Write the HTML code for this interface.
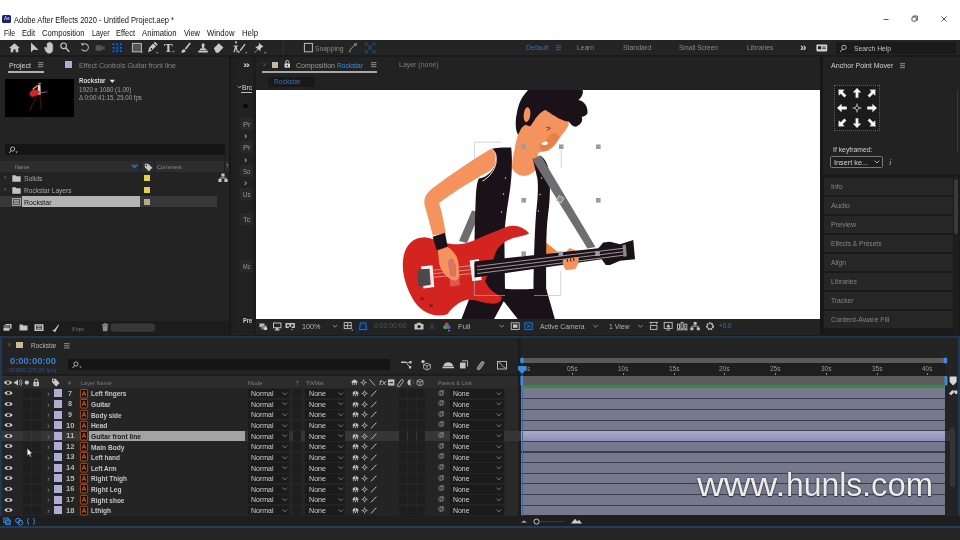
<!DOCTYPE html>
<html><head><meta charset="utf-8"><title>Adobe After Effects 2020 - Untitled Project.aep</title>
<style>
html,body{margin:0;padding:0;background:#232323;}
body{width:960px;height:540px;overflow:hidden;position:relative;font-family:"Liberation Sans",sans-serif;}
#app{position:absolute;left:0;top:0;width:960px;height:540px;overflow:hidden;will-change:transform;}
#app div{position:absolute;box-sizing:border-box;}
#app span{position:absolute;white-space:nowrap;transform-origin:0 50%;}
#app svg{position:absolute;overflow:visible;}
</style></head><body><div id="app">
<div style="left:0px;top:0px;width:960px;height:39.5px;background:#ffffff;"></div>
<div style="left:2px;top:15.4px;width:8.6px;height:7.2px;background:#1f1f6e;border-radius:1.5px;"></div>
<span style="left:3.6px;top:16.43px;font-size:4.6px;line-height:5.52px;color:#c9c9ff;font-weight:bold;transform:scaleX(0.952);">Ae</span>
<span style="left:13.5px;top:14.67px;font-size:8.4px;line-height:10.08px;color:#111;transform:scaleX(0.896);">Adobe After Effects 2020 - Untitled Project.aep *</span>
<span style="left:3.5px;top:29.03px;font-size:8.3px;line-height:9.96px;color:#111;transform:scaleX(0.823);">File</span>
<span style="left:22px;top:29.03px;font-size:8.3px;line-height:9.96px;color:#111;transform:scaleX(0.909);">Edit</span>
<span style="left:42px;top:29.03px;font-size:8.3px;line-height:9.96px;color:#111;transform:scaleX(0.921);">Composition</span>
<span style="left:91.5px;top:29.03px;font-size:8.3px;line-height:9.96px;color:#111;transform:scaleX(0.843);">Layer</span>
<span style="left:116px;top:29.03px;font-size:8.3px;line-height:9.96px;color:#111;transform:scaleX(0.902);">Effect</span>
<span style="left:142px;top:29.03px;font-size:8.3px;line-height:9.96px;color:#111;transform:scaleX(0.935);">Animation</span>
<span style="left:183.5px;top:29.03px;font-size:8.3px;line-height:9.96px;color:#111;transform:scaleX(0.897);">View</span>
<span style="left:206.5px;top:29.03px;font-size:8.3px;line-height:9.96px;color:#111;transform:scaleX(0.932);">Window</span>
<span style="left:241.5px;top:29.03px;font-size:8.3px;line-height:9.96px;color:#111;transform:scaleX(0.937);">Help</span>
<svg style="left:880px;top:13px" width="74" height="12" viewBox="0 0 74 12"><g stroke="#333" stroke-width="0.8" fill="none"><path d="M3.5 6.5h5"/><rect x="32" y="4" width="4.2" height="4.2" rx="0.8"/><path d="M33.2 4V3h4.2v4.2h-1.2"/><path d="M61.5 3.5l5 5M66.5 3.5l-5 5"/></g></svg>
<div style="left:0px;top:39.5px;width:960px;height:16.5px;background:#242424;"></div>
<div style="left:0px;top:55.3px;width:960px;height:1.6px;background:#1a1a1a;"></div>
<div style="left:0px;top:56.9px;width:229px;height:277.6px;background:#232323;"></div>
<div style="left:229px;top:56.9px;width:7px;height:277.6px;background:#1f1f1f;"></div>
<div style="left:229px;top:56.9px;width:2px;height:277.6px;background:#181818;"></div>
<div style="left:236px;top:56.9px;width:20px;height:277.6px;background:#212121;"></div>
<div style="left:256px;top:56.9px;width:564px;height:33.6px;background:#222222;"></div>
<div style="left:256px;top:90px;width:564px;height:228.5px;background:#ffffff;"></div>
<div style="left:256px;top:318.5px;width:564px;height:16px;background:#232323;"></div>
<div style="left:820px;top:56.9px;width:2.5px;height:277.6px;background:#171717;"></div>
<div style="left:822.5px;top:56.9px;width:137.5px;height:277.6px;background:#222222;"></div>
<div style="left:0px;top:334.5px;width:960px;height:1.7px;background:#1a1a1a;"></div>
<div style="left:0px;top:336.1px;width:960px;height:2.3px;background:#21344c;"></div>
<div style="left:0px;top:338.4px;width:960px;height:188.6px;background:#232323;"></div>
<div style="left:0px;top:526.3px;width:960px;height:1.3px;background:#263c58;"></div>
<div style="left:0px;top:527.7px;width:960px;height:12.3px;background:#252525;"></div>
<span style="left:7.5px;top:341.10px;font-size:7px;line-height:8.40px;color:#777;transform:scaleX(0.734);">×</span>
<div style="left:16px;top:341.5px;width:6.5px;height:6.5px;background:#c8bd98;"></div>
<span style="left:30.5px;top:341.18px;font-size:8px;line-height:9.60px;color:#b8b8b8;transform:scaleX(0.808);">Rockstar</span>
<svg style="left:64px;top:342.5px" width="6" height="6"><path d="M0 0.7h5.6M0 2.8h5.6M0 4.9h5.6" stroke="#aaa" stroke-width="0.8"/></svg>
<span style="left:10px;top:355.30px;font-size:9.5px;line-height:11.40px;color:#3482d4;font-weight:bold;transform:scaleX(0.990);">0:00:00:00</span>
<span style="left:8.5px;top:367.42px;font-size:5.6px;line-height:6.72px;color:#25568f;transform:scaleX(1.082);">00000 (25.00 fps)</span>
<div style="left:68px;top:359px;width:322px;height:10.8px;background:#151515;border-radius:1px;"></div>
<svg style="left:71px;top:360.5px" width="12" height="8"><circle cx="5" cy="3" r="2.1" fill="none" stroke="#bbb" stroke-width="0.9"/><path d="M3.6 4.6L1.6 7" stroke="#bbb" stroke-width="1"/><path d="M8.2 5.6h2.4l-1.2 1.3z" fill="#bbb"/></svg>
<div style="left:0px;top:374.4px;width:518px;height:1.6px;background:#1c1c1c;"></div>
<div style="left:0px;top:376px;width:518px;height:12px;background:#2c2c2c;"></div>
<div style="left:0px;top:388px;width:518px;height:128px;background:#242424;"></div>
<div style="left:504.5px;top:388px;width:13.5px;height:128px;background:#292929;"></div>
<div style="left:518px;top:338.4px;width:3px;height:188px;background:#1c1c1c;"></div>
<span style="left:67.5px;top:379.70px;font-size:5.5px;line-height:6.60px;color:#777;transform:scaleX(0.981);">#</span>
<span style="left:80.5px;top:380.01px;font-size:5.8px;line-height:6.96px;color:#7d7d7d;transform:scaleX(0.966);">Layer Name</span>
<span style="left:248px;top:380.01px;font-size:5.8px;line-height:6.96px;color:#7d7d7d;transform:scaleX(1.000);">Mode</span>
<span style="left:295.5px;top:379.52px;font-size:5.8px;line-height:6.96px;color:#7d7d7d;transform:scaleX(0.847);">T</span>
<span style="left:306px;top:380.01px;font-size:5.8px;line-height:6.96px;color:#7d7d7d;transform:scaleX(1.010);">TrkMat</span>
<span style="left:437.5px;top:380.01px;font-size:5.8px;line-height:6.96px;color:#7d7d7d;transform:scaleX(0.977);">Parent &amp; Link</span>
<svg style="left:3.5px;top:390.31px" width="9" height="6" viewBox="0 0 9 6"><path d="M0.3 3C2 0.3 7 0.3 8.7 3C7 5.7 2 5.7 0.3 3z" fill="#c8c8c8"/><circle cx="4.5" cy="3" r="1.5" fill="#222"/></svg>
<div style="left:22.5px;top:389.0px;width:8.5px;height:9.219999999999999px;background:#1e1e1e;"></div>
<div style="left:32px;top:389.0px;width:8.5px;height:9.219999999999999px;background:#1e1e1e;"></div>
<span style="left:46.8px;top:389.11px;font-size:8.5px;line-height:10.20px;color:#808080;transform:scaleX(0.989);">›</span>
<div style="left:54px;top:389.31px;width:8px;height:8px;background:#b1acd4;"></div>
<span style="left:68px;top:388.75px;font-size:7.6px;line-height:9.12px;color:#b8b8b8;font-weight:bold;transform:scaleX(0.946);">7</span>
<svg style="left:79.5px;top:388.71px" width="8" height="9.4" viewBox="0 0 8 9.4"><rect x="0.4" y="0.4" width="7.2" height="8.6" rx="1" fill="#1d0a00" stroke="#c4601f" stroke-width="0.8"/><path d="M2.3 6.8L3.6 2.6h0.8L5.7 6.8M2.9 5.3h2.2" stroke="#e8742a" stroke-width="0.8" fill="none"/></svg>
<span style="left:91px;top:389.40px;font-size:7.6px;line-height:9.12px;color:#c6c6c6;font-weight:bold;transform:scaleX(0.858);">Left fingers</span>
<div style="left:247.5px;top:389.0px;width:41.5px;height:9.219999999999999px;background:#1b1b1b;"></div>
<span style="left:251px;top:389.19px;font-size:8px;line-height:9.60px;color:#cfcfcf;transform:scaleX(0.873);">Normal</span>
<svg style="left:281.5px;top:391.81px" width="6" height="4"><path d="M0.6 0.6L2.8 2.8L5 0.6" stroke="#999" stroke-width="0.8" fill="none"/></svg>
<div style="left:292.5px;top:389.0px;width:8.5px;height:9.219999999999999px;background:#1e1e1e;"></div>
<div style="left:305px;top:389.0px;width:40px;height:9.219999999999999px;background:#1b1b1b;"></div>
<span style="left:309px;top:389.19px;font-size:8px;line-height:9.60px;color:#cfcfcf;transform:scaleX(0.889);">None</span>
<svg style="left:337.5px;top:391.81px" width="6" height="4"><path d="M0.6 0.6L2.8 2.8L5 0.6" stroke="#999" stroke-width="0.8" fill="none"/></svg>
<svg style="left:351.5px;top:390.11px" width="26" height="7" viewBox="0 0 26 7"><path d="M0.5 4.2C0.5 0 6.5 0 6.5 4.2z" fill="#c0c0c0"/><path d="M1.6 4.2v2M3.5 0.8v5.4M5.4 4.2v2" stroke="#c0c0c0" stroke-width="0.8"/><path d="M3.5 0.8v3.4" stroke="#222" stroke-width="0.6"/><circle cx="12.6" cy="3.4" r="1.5" fill="none" stroke="#c0c0c0" stroke-width="0.8"/><path d="M12.6 0.4v1.4M12.6 5v1.4M9.6 3.4h1.4M14.2 3.4h1.4" stroke="#c0c0c0" stroke-width="0.8"/><path d="M19 6.4L24.4 0.6" stroke="#c8c8c8" stroke-width="0.9"/></svg>
<div style="left:399px;top:389.0px;width:8px;height:9.219999999999999px;background:#1e1e1e;"></div>
<div style="left:407.8px;top:389.0px;width:8px;height:9.219999999999999px;background:#1e1e1e;"></div>
<div style="left:416.6px;top:389.0px;width:8px;height:9.219999999999999px;background:#1e1e1e;"></div>
<span style="left:437.8px;top:388.57px;font-size:7.4px;line-height:8.88px;color:#a0a0a0;transform:scaleX(0.905);">@</span>
<div style="left:450px;top:389.0px;width:53.5px;height:9.219999999999999px;background:#1b1b1b;"></div>
<span style="left:453px;top:389.19px;font-size:8px;line-height:9.60px;color:#cfcfcf;transform:scaleX(0.863);">None</span>
<svg style="left:496px;top:391.81px" width="6" height="4"><path d="M0.6 0.6L2.8 2.8L5 0.6" stroke="#999" stroke-width="0.8" fill="none"/></svg>
<svg style="left:3.5px;top:400.93px" width="9" height="6" viewBox="0 0 9 6"><path d="M0.3 3C2 0.3 7 0.3 8.7 3C7 5.7 2 5.7 0.3 3z" fill="#c8c8c8"/><circle cx="4.5" cy="3" r="1.5" fill="#222"/></svg>
<div style="left:22.5px;top:399.62px;width:8.5px;height:9.219999999999999px;background:#1e1e1e;"></div>
<div style="left:32px;top:399.62px;width:8.5px;height:9.219999999999999px;background:#1e1e1e;"></div>
<span style="left:46.8px;top:399.73px;font-size:8.5px;line-height:10.20px;color:#808080;transform:scaleX(0.989);">›</span>
<div style="left:54px;top:399.93px;width:8px;height:8px;background:#b1acd4;"></div>
<span style="left:68px;top:399.37px;font-size:7.6px;line-height:9.12px;color:#b8b8b8;font-weight:bold;transform:scaleX(0.946);">8</span>
<svg style="left:79.5px;top:399.33px" width="8" height="9.4" viewBox="0 0 8 9.4"><rect x="0.4" y="0.4" width="7.2" height="8.6" rx="1" fill="#1d0a00" stroke="#c4601f" stroke-width="0.8"/><path d="M2.3 6.8L3.6 2.6h0.8L5.7 6.8M2.9 5.3h2.2" stroke="#e8742a" stroke-width="0.8" fill="none"/></svg>
<span style="left:91px;top:400.02px;font-size:7.6px;line-height:9.12px;color:#c6c6c6;font-weight:bold;transform:scaleX(0.871);">Guitar</span>
<div style="left:247.5px;top:399.62px;width:41.5px;height:9.219999999999999px;background:#1b1b1b;"></div>
<span style="left:251px;top:399.81px;font-size:8px;line-height:9.60px;color:#cfcfcf;transform:scaleX(0.873);">Normal</span>
<svg style="left:281.5px;top:402.43px" width="6" height="4"><path d="M0.6 0.6L2.8 2.8L5 0.6" stroke="#999" stroke-width="0.8" fill="none"/></svg>
<div style="left:292.5px;top:399.62px;width:8.5px;height:9.219999999999999px;background:#1e1e1e;"></div>
<div style="left:305px;top:399.62px;width:40px;height:9.219999999999999px;background:#1b1b1b;"></div>
<span style="left:309px;top:399.81px;font-size:8px;line-height:9.60px;color:#cfcfcf;transform:scaleX(0.889);">None</span>
<svg style="left:337.5px;top:402.43px" width="6" height="4"><path d="M0.6 0.6L2.8 2.8L5 0.6" stroke="#999" stroke-width="0.8" fill="none"/></svg>
<svg style="left:351.5px;top:400.73px" width="26" height="7" viewBox="0 0 26 7"><path d="M0.5 4.2C0.5 0 6.5 0 6.5 4.2z" fill="#c0c0c0"/><path d="M1.6 4.2v2M3.5 0.8v5.4M5.4 4.2v2" stroke="#c0c0c0" stroke-width="0.8"/><path d="M3.5 0.8v3.4" stroke="#222" stroke-width="0.6"/><circle cx="12.6" cy="3.4" r="1.5" fill="none" stroke="#c0c0c0" stroke-width="0.8"/><path d="M12.6 0.4v1.4M12.6 5v1.4M9.6 3.4h1.4M14.2 3.4h1.4" stroke="#c0c0c0" stroke-width="0.8"/><path d="M19 6.4L24.4 0.6" stroke="#c8c8c8" stroke-width="0.9"/></svg>
<div style="left:399px;top:399.62px;width:8px;height:9.219999999999999px;background:#1e1e1e;"></div>
<div style="left:407.8px;top:399.62px;width:8px;height:9.219999999999999px;background:#1e1e1e;"></div>
<div style="left:416.6px;top:399.62px;width:8px;height:9.219999999999999px;background:#1e1e1e;"></div>
<span style="left:437.8px;top:399.19px;font-size:7.4px;line-height:8.88px;color:#a0a0a0;transform:scaleX(0.905);">@</span>
<div style="left:450px;top:399.62px;width:53.5px;height:9.219999999999999px;background:#1b1b1b;"></div>
<span style="left:453px;top:399.81px;font-size:8px;line-height:9.60px;color:#cfcfcf;transform:scaleX(0.863);">None</span>
<svg style="left:496px;top:402.43px" width="6" height="4"><path d="M0.6 0.6L2.8 2.8L5 0.6" stroke="#999" stroke-width="0.8" fill="none"/></svg>
<svg style="left:3.5px;top:411.55px" width="9" height="6" viewBox="0 0 9 6"><path d="M0.3 3C2 0.3 7 0.3 8.7 3C7 5.7 2 5.7 0.3 3z" fill="#c8c8c8"/><circle cx="4.5" cy="3" r="1.5" fill="#222"/></svg>
<div style="left:22.5px;top:410.24px;width:8.5px;height:9.219999999999999px;background:#1e1e1e;"></div>
<div style="left:32px;top:410.24px;width:8.5px;height:9.219999999999999px;background:#1e1e1e;"></div>
<span style="left:46.8px;top:410.35px;font-size:8.5px;line-height:10.20px;color:#808080;transform:scaleX(0.989);">›</span>
<div style="left:54px;top:410.55px;width:8px;height:8px;background:#b1acd4;"></div>
<span style="left:68px;top:409.99px;font-size:7.6px;line-height:9.12px;color:#b8b8b8;font-weight:bold;transform:scaleX(0.946);">9</span>
<svg style="left:79.5px;top:409.95px" width="8" height="9.4" viewBox="0 0 8 9.4"><rect x="0.4" y="0.4" width="7.2" height="8.6" rx="1" fill="#1d0a00" stroke="#c4601f" stroke-width="0.8"/><path d="M2.3 6.8L3.6 2.6h0.8L5.7 6.8M2.9 5.3h2.2" stroke="#e8742a" stroke-width="0.8" fill="none"/></svg>
<span style="left:91px;top:410.64px;font-size:7.6px;line-height:9.12px;color:#c6c6c6;font-weight:bold;transform:scaleX(0.840);">Body side</span>
<div style="left:247.5px;top:410.24px;width:41.5px;height:9.219999999999999px;background:#1b1b1b;"></div>
<span style="left:251px;top:410.43px;font-size:8px;line-height:9.60px;color:#cfcfcf;transform:scaleX(0.873);">Normal</span>
<svg style="left:281.5px;top:413.05px" width="6" height="4"><path d="M0.6 0.6L2.8 2.8L5 0.6" stroke="#999" stroke-width="0.8" fill="none"/></svg>
<div style="left:292.5px;top:410.24px;width:8.5px;height:9.219999999999999px;background:#1e1e1e;"></div>
<div style="left:305px;top:410.24px;width:40px;height:9.219999999999999px;background:#1b1b1b;"></div>
<span style="left:309px;top:410.43px;font-size:8px;line-height:9.60px;color:#cfcfcf;transform:scaleX(0.889);">None</span>
<svg style="left:337.5px;top:413.05px" width="6" height="4"><path d="M0.6 0.6L2.8 2.8L5 0.6" stroke="#999" stroke-width="0.8" fill="none"/></svg>
<svg style="left:351.5px;top:411.35px" width="26" height="7" viewBox="0 0 26 7"><path d="M0.5 4.2C0.5 0 6.5 0 6.5 4.2z" fill="#c0c0c0"/><path d="M1.6 4.2v2M3.5 0.8v5.4M5.4 4.2v2" stroke="#c0c0c0" stroke-width="0.8"/><path d="M3.5 0.8v3.4" stroke="#222" stroke-width="0.6"/><circle cx="12.6" cy="3.4" r="1.5" fill="none" stroke="#c0c0c0" stroke-width="0.8"/><path d="M12.6 0.4v1.4M12.6 5v1.4M9.6 3.4h1.4M14.2 3.4h1.4" stroke="#c0c0c0" stroke-width="0.8"/><path d="M19 6.4L24.4 0.6" stroke="#c8c8c8" stroke-width="0.9"/></svg>
<div style="left:399px;top:410.24px;width:8px;height:9.219999999999999px;background:#1e1e1e;"></div>
<div style="left:407.8px;top:410.24px;width:8px;height:9.219999999999999px;background:#1e1e1e;"></div>
<div style="left:416.6px;top:410.24px;width:8px;height:9.219999999999999px;background:#1e1e1e;"></div>
<span style="left:437.8px;top:409.81px;font-size:7.4px;line-height:8.88px;color:#a0a0a0;transform:scaleX(0.905);">@</span>
<div style="left:450px;top:410.24px;width:53.5px;height:9.219999999999999px;background:#1b1b1b;"></div>
<span style="left:453px;top:410.43px;font-size:8px;line-height:9.60px;color:#cfcfcf;transform:scaleX(0.863);">None</span>
<svg style="left:496px;top:413.05px" width="6" height="4"><path d="M0.6 0.6L2.8 2.8L5 0.6" stroke="#999" stroke-width="0.8" fill="none"/></svg>
<svg style="left:3.5px;top:422.17px" width="9" height="6" viewBox="0 0 9 6"><path d="M0.3 3C2 0.3 7 0.3 8.7 3C7 5.7 2 5.7 0.3 3z" fill="#c8c8c8"/><circle cx="4.5" cy="3" r="1.5" fill="#222"/></svg>
<div style="left:22.5px;top:420.86px;width:8.5px;height:9.219999999999999px;background:#1e1e1e;"></div>
<div style="left:32px;top:420.86px;width:8.5px;height:9.219999999999999px;background:#1e1e1e;"></div>
<span style="left:46.8px;top:420.97px;font-size:8.5px;line-height:10.20px;color:#808080;transform:scaleX(0.989);">›</span>
<div style="left:54px;top:421.17px;width:8px;height:8px;background:#b1acd4;"></div>
<span style="left:66px;top:420.61px;font-size:7.6px;line-height:9.12px;color:#b8b8b8;font-weight:bold;transform:scaleX(1.006);">10</span>
<svg style="left:79.5px;top:420.57px" width="8" height="9.4" viewBox="0 0 8 9.4"><rect x="0.4" y="0.4" width="7.2" height="8.6" rx="1" fill="#1d0a00" stroke="#c4601f" stroke-width="0.8"/><path d="M2.3 6.8L3.6 2.6h0.8L5.7 6.8M2.9 5.3h2.2" stroke="#e8742a" stroke-width="0.8" fill="none"/></svg>
<span style="left:91px;top:421.26px;font-size:7.6px;line-height:9.12px;color:#c6c6c6;font-weight:bold;transform:scaleX(0.888);">Head</span>
<div style="left:247.5px;top:420.86px;width:41.5px;height:9.219999999999999px;background:#1b1b1b;"></div>
<span style="left:251px;top:421.05px;font-size:8px;line-height:9.60px;color:#cfcfcf;transform:scaleX(0.873);">Normal</span>
<svg style="left:281.5px;top:423.67px" width="6" height="4"><path d="M0.6 0.6L2.8 2.8L5 0.6" stroke="#999" stroke-width="0.8" fill="none"/></svg>
<div style="left:292.5px;top:420.86px;width:8.5px;height:9.219999999999999px;background:#1e1e1e;"></div>
<div style="left:305px;top:420.86px;width:40px;height:9.219999999999999px;background:#1b1b1b;"></div>
<span style="left:309px;top:421.05px;font-size:8px;line-height:9.60px;color:#cfcfcf;transform:scaleX(0.889);">None</span>
<svg style="left:337.5px;top:423.67px" width="6" height="4"><path d="M0.6 0.6L2.8 2.8L5 0.6" stroke="#999" stroke-width="0.8" fill="none"/></svg>
<svg style="left:351.5px;top:421.97px" width="26" height="7" viewBox="0 0 26 7"><path d="M0.5 4.2C0.5 0 6.5 0 6.5 4.2z" fill="#c0c0c0"/><path d="M1.6 4.2v2M3.5 0.8v5.4M5.4 4.2v2" stroke="#c0c0c0" stroke-width="0.8"/><path d="M3.5 0.8v3.4" stroke="#222" stroke-width="0.6"/><circle cx="12.6" cy="3.4" r="1.5" fill="none" stroke="#c0c0c0" stroke-width="0.8"/><path d="M12.6 0.4v1.4M12.6 5v1.4M9.6 3.4h1.4M14.2 3.4h1.4" stroke="#c0c0c0" stroke-width="0.8"/><path d="M19 6.4L24.4 0.6" stroke="#c8c8c8" stroke-width="0.9"/></svg>
<div style="left:399px;top:420.86px;width:8px;height:9.219999999999999px;background:#1e1e1e;"></div>
<div style="left:407.8px;top:420.86px;width:8px;height:9.219999999999999px;background:#1e1e1e;"></div>
<div style="left:416.6px;top:420.86px;width:8px;height:9.219999999999999px;background:#1e1e1e;"></div>
<span style="left:437.8px;top:420.43px;font-size:7.4px;line-height:8.88px;color:#a0a0a0;transform:scaleX(0.905);">@</span>
<div style="left:450px;top:420.86px;width:53.5px;height:9.219999999999999px;background:#1b1b1b;"></div>
<span style="left:453px;top:421.05px;font-size:8px;line-height:9.60px;color:#cfcfcf;transform:scaleX(0.863);">None</span>
<svg style="left:496px;top:423.67px" width="6" height="4"><path d="M0.6 0.6L2.8 2.8L5 0.6" stroke="#999" stroke-width="0.8" fill="none"/></svg>
<div style="left:0px;top:431.08px;width:518px;height:10.02px;background:#363636;"></div>
<svg style="left:3.5px;top:432.79px" width="9" height="6" viewBox="0 0 9 6"><path d="M0.3 3C2 0.3 7 0.3 8.7 3C7 5.7 2 5.7 0.3 3z" fill="#c8c8c8"/><circle cx="4.5" cy="3" r="1.5" fill="#222"/></svg>
<div style="left:22.5px;top:431.48px;width:8.5px;height:9.219999999999999px;background:#2e2e2e;"></div>
<div style="left:32px;top:431.48px;width:8.5px;height:9.219999999999999px;background:#2e2e2e;"></div>
<span style="left:46.8px;top:431.59px;font-size:8.5px;line-height:10.20px;color:#808080;transform:scaleX(0.989);">›</span>
<div style="left:54px;top:431.79px;width:8px;height:8px;background:#b1acd4;"></div>
<span style="left:66px;top:431.23px;font-size:7.6px;line-height:9.12px;color:#b8b8b8;font-weight:bold;transform:scaleX(1.058);">11</span>
<svg style="left:79.5px;top:431.19px" width="8" height="9.4" viewBox="0 0 8 9.4"><rect x="0.4" y="0.4" width="7.2" height="8.6" rx="1" fill="#1d0a00" stroke="#c4601f" stroke-width="0.8"/><path d="M2.3 6.8L3.6 2.6h0.8L5.7 6.8M2.9 5.3h2.2" stroke="#e8742a" stroke-width="0.8" fill="none"/></svg>
<div style="left:88.5px;top:431.28000000000003px;width:156.5px;height:9.62px;background:#a3a3a3;"></div>
<span style="left:91px;top:431.88px;font-size:7.6px;line-height:9.12px;color:#1a1a1a;font-weight:bold;transform:scaleX(0.877);">Guitar front line</span>
<div style="left:247.5px;top:431.48px;width:41.5px;height:9.219999999999999px;background:#1b1b1b;"></div>
<span style="left:251px;top:431.67px;font-size:8px;line-height:9.60px;color:#cfcfcf;transform:scaleX(0.873);">Normal</span>
<svg style="left:281.5px;top:434.29px" width="6" height="4"><path d="M0.6 0.6L2.8 2.8L5 0.6" stroke="#999" stroke-width="0.8" fill="none"/></svg>
<div style="left:292.5px;top:431.48px;width:8.5px;height:9.219999999999999px;background:#1e1e1e;"></div>
<div style="left:305px;top:431.48px;width:40px;height:9.219999999999999px;background:#1b1b1b;"></div>
<span style="left:309px;top:431.67px;font-size:8px;line-height:9.60px;color:#cfcfcf;transform:scaleX(0.889);">None</span>
<svg style="left:337.5px;top:434.29px" width="6" height="4"><path d="M0.6 0.6L2.8 2.8L5 0.6" stroke="#999" stroke-width="0.8" fill="none"/></svg>
<svg style="left:351.5px;top:432.59px" width="26" height="7" viewBox="0 0 26 7"><path d="M0.5 4.2C0.5 0 6.5 0 6.5 4.2z" fill="#c0c0c0"/><path d="M1.6 4.2v2M3.5 0.8v5.4M5.4 4.2v2" stroke="#c0c0c0" stroke-width="0.8"/><path d="M3.5 0.8v3.4" stroke="#222" stroke-width="0.6"/><circle cx="12.6" cy="3.4" r="1.5" fill="none" stroke="#c0c0c0" stroke-width="0.8"/><path d="M12.6 0.4v1.4M12.6 5v1.4M9.6 3.4h1.4M14.2 3.4h1.4" stroke="#c0c0c0" stroke-width="0.8"/><path d="M19 6.4L24.4 0.6" stroke="#c8c8c8" stroke-width="0.9"/></svg>
<div style="left:399px;top:431.48px;width:8px;height:9.219999999999999px;background:#1e1e1e;"></div>
<div style="left:407.8px;top:431.48px;width:8px;height:9.219999999999999px;background:#1e1e1e;"></div>
<div style="left:416.6px;top:431.48px;width:8px;height:9.219999999999999px;background:#1e1e1e;"></div>
<span style="left:437.8px;top:431.05px;font-size:7.4px;line-height:8.88px;color:#a0a0a0;transform:scaleX(0.905);">@</span>
<div style="left:450px;top:431.48px;width:53.5px;height:9.219999999999999px;background:#1b1b1b;"></div>
<span style="left:453px;top:431.67px;font-size:8px;line-height:9.60px;color:#cfcfcf;transform:scaleX(0.863);">None</span>
<svg style="left:496px;top:434.29px" width="6" height="4"><path d="M0.6 0.6L2.8 2.8L5 0.6" stroke="#999" stroke-width="0.8" fill="none"/></svg>
<svg style="left:3.5px;top:443.41px" width="9" height="6" viewBox="0 0 9 6"><path d="M0.3 3C2 0.3 7 0.3 8.7 3C7 5.7 2 5.7 0.3 3z" fill="#c8c8c8"/><circle cx="4.5" cy="3" r="1.5" fill="#222"/></svg>
<div style="left:22.5px;top:442.09999999999997px;width:8.5px;height:9.219999999999999px;background:#1e1e1e;"></div>
<div style="left:32px;top:442.09999999999997px;width:8.5px;height:9.219999999999999px;background:#1e1e1e;"></div>
<span style="left:46.8px;top:442.21px;font-size:8.5px;line-height:10.20px;color:#808080;transform:scaleX(0.989);">›</span>
<div style="left:54px;top:442.40999999999997px;width:8px;height:8px;background:#b1acd4;"></div>
<span style="left:66px;top:441.85px;font-size:7.6px;line-height:9.12px;color:#b8b8b8;font-weight:bold;transform:scaleX(1.006);">12</span>
<svg style="left:79.5px;top:441.81px" width="8" height="9.4" viewBox="0 0 8 9.4"><rect x="0.4" y="0.4" width="7.2" height="8.6" rx="1" fill="#1d0a00" stroke="#c4601f" stroke-width="0.8"/><path d="M2.3 6.8L3.6 2.6h0.8L5.7 6.8M2.9 5.3h2.2" stroke="#e8742a" stroke-width="0.8" fill="none"/></svg>
<span style="left:91px;top:442.50px;font-size:7.6px;line-height:9.12px;color:#c6c6c6;font-weight:bold;transform:scaleX(0.872);">Main Body</span>
<div style="left:247.5px;top:442.09999999999997px;width:41.5px;height:9.219999999999999px;background:#1b1b1b;"></div>
<span style="left:251px;top:442.29px;font-size:8px;line-height:9.60px;color:#cfcfcf;transform:scaleX(0.873);">Normal</span>
<svg style="left:281.5px;top:444.91px" width="6" height="4"><path d="M0.6 0.6L2.8 2.8L5 0.6" stroke="#999" stroke-width="0.8" fill="none"/></svg>
<div style="left:292.5px;top:442.09999999999997px;width:8.5px;height:9.219999999999999px;background:#1e1e1e;"></div>
<div style="left:305px;top:442.09999999999997px;width:40px;height:9.219999999999999px;background:#1b1b1b;"></div>
<span style="left:309px;top:442.29px;font-size:8px;line-height:9.60px;color:#cfcfcf;transform:scaleX(0.889);">None</span>
<svg style="left:337.5px;top:444.91px" width="6" height="4"><path d="M0.6 0.6L2.8 2.8L5 0.6" stroke="#999" stroke-width="0.8" fill="none"/></svg>
<svg style="left:351.5px;top:443.21px" width="26" height="7" viewBox="0 0 26 7"><path d="M0.5 4.2C0.5 0 6.5 0 6.5 4.2z" fill="#c0c0c0"/><path d="M1.6 4.2v2M3.5 0.8v5.4M5.4 4.2v2" stroke="#c0c0c0" stroke-width="0.8"/><path d="M3.5 0.8v3.4" stroke="#222" stroke-width="0.6"/><circle cx="12.6" cy="3.4" r="1.5" fill="none" stroke="#c0c0c0" stroke-width="0.8"/><path d="M12.6 0.4v1.4M12.6 5v1.4M9.6 3.4h1.4M14.2 3.4h1.4" stroke="#c0c0c0" stroke-width="0.8"/><path d="M19 6.4L24.4 0.6" stroke="#c8c8c8" stroke-width="0.9"/></svg>
<div style="left:399px;top:442.09999999999997px;width:8px;height:9.219999999999999px;background:#1e1e1e;"></div>
<div style="left:407.8px;top:442.09999999999997px;width:8px;height:9.219999999999999px;background:#1e1e1e;"></div>
<div style="left:416.6px;top:442.09999999999997px;width:8px;height:9.219999999999999px;background:#1e1e1e;"></div>
<span style="left:437.8px;top:441.67px;font-size:7.4px;line-height:8.88px;color:#a0a0a0;transform:scaleX(0.905);">@</span>
<div style="left:450px;top:442.09999999999997px;width:53.5px;height:9.219999999999999px;background:#1b1b1b;"></div>
<span style="left:453px;top:442.29px;font-size:8px;line-height:9.60px;color:#cfcfcf;transform:scaleX(0.863);">None</span>
<svg style="left:496px;top:444.91px" width="6" height="4"><path d="M0.6 0.6L2.8 2.8L5 0.6" stroke="#999" stroke-width="0.8" fill="none"/></svg>
<svg style="left:3.5px;top:454.03px" width="9" height="6" viewBox="0 0 9 6"><path d="M0.3 3C2 0.3 7 0.3 8.7 3C7 5.7 2 5.7 0.3 3z" fill="#c8c8c8"/><circle cx="4.5" cy="3" r="1.5" fill="#222"/></svg>
<div style="left:22.5px;top:452.71999999999997px;width:8.5px;height:9.219999999999999px;background:#1e1e1e;"></div>
<div style="left:32px;top:452.71999999999997px;width:8.5px;height:9.219999999999999px;background:#1e1e1e;"></div>
<span style="left:46.8px;top:452.83px;font-size:8.5px;line-height:10.20px;color:#808080;transform:scaleX(0.989);">›</span>
<div style="left:54px;top:453.03px;width:8px;height:8px;background:#b1acd4;"></div>
<span style="left:66px;top:452.47px;font-size:7.6px;line-height:9.12px;color:#b8b8b8;font-weight:bold;transform:scaleX(1.006);">13</span>
<svg style="left:79.5px;top:452.43px" width="8" height="9.4" viewBox="0 0 8 9.4"><rect x="0.4" y="0.4" width="7.2" height="8.6" rx="1" fill="#1d0a00" stroke="#c4601f" stroke-width="0.8"/><path d="M2.3 6.8L3.6 2.6h0.8L5.7 6.8M2.9 5.3h2.2" stroke="#e8742a" stroke-width="0.8" fill="none"/></svg>
<span style="left:91px;top:453.12px;font-size:7.6px;line-height:9.12px;color:#c6c6c6;font-weight:bold;transform:scaleX(0.848);">Left hand</span>
<div style="left:247.5px;top:452.71999999999997px;width:41.5px;height:9.219999999999999px;background:#1b1b1b;"></div>
<span style="left:251px;top:452.91px;font-size:8px;line-height:9.60px;color:#cfcfcf;transform:scaleX(0.873);">Normal</span>
<svg style="left:281.5px;top:455.53px" width="6" height="4"><path d="M0.6 0.6L2.8 2.8L5 0.6" stroke="#999" stroke-width="0.8" fill="none"/></svg>
<div style="left:292.5px;top:452.71999999999997px;width:8.5px;height:9.219999999999999px;background:#1e1e1e;"></div>
<div style="left:305px;top:452.71999999999997px;width:40px;height:9.219999999999999px;background:#1b1b1b;"></div>
<span style="left:309px;top:452.91px;font-size:8px;line-height:9.60px;color:#cfcfcf;transform:scaleX(0.889);">None</span>
<svg style="left:337.5px;top:455.53px" width="6" height="4"><path d="M0.6 0.6L2.8 2.8L5 0.6" stroke="#999" stroke-width="0.8" fill="none"/></svg>
<svg style="left:351.5px;top:453.83px" width="26" height="7" viewBox="0 0 26 7"><path d="M0.5 4.2C0.5 0 6.5 0 6.5 4.2z" fill="#c0c0c0"/><path d="M1.6 4.2v2M3.5 0.8v5.4M5.4 4.2v2" stroke="#c0c0c0" stroke-width="0.8"/><path d="M3.5 0.8v3.4" stroke="#222" stroke-width="0.6"/><circle cx="12.6" cy="3.4" r="1.5" fill="none" stroke="#c0c0c0" stroke-width="0.8"/><path d="M12.6 0.4v1.4M12.6 5v1.4M9.6 3.4h1.4M14.2 3.4h1.4" stroke="#c0c0c0" stroke-width="0.8"/><path d="M19 6.4L24.4 0.6" stroke="#c8c8c8" stroke-width="0.9"/></svg>
<div style="left:399px;top:452.71999999999997px;width:8px;height:9.219999999999999px;background:#1e1e1e;"></div>
<div style="left:407.8px;top:452.71999999999997px;width:8px;height:9.219999999999999px;background:#1e1e1e;"></div>
<div style="left:416.6px;top:452.71999999999997px;width:8px;height:9.219999999999999px;background:#1e1e1e;"></div>
<span style="left:437.8px;top:452.29px;font-size:7.4px;line-height:8.88px;color:#a0a0a0;transform:scaleX(0.905);">@</span>
<div style="left:450px;top:452.71999999999997px;width:53.5px;height:9.219999999999999px;background:#1b1b1b;"></div>
<span style="left:453px;top:452.91px;font-size:8px;line-height:9.60px;color:#cfcfcf;transform:scaleX(0.863);">None</span>
<svg style="left:496px;top:455.53px" width="6" height="4"><path d="M0.6 0.6L2.8 2.8L5 0.6" stroke="#999" stroke-width="0.8" fill="none"/></svg>
<svg style="left:3.5px;top:464.65px" width="9" height="6" viewBox="0 0 9 6"><path d="M0.3 3C2 0.3 7 0.3 8.7 3C7 5.7 2 5.7 0.3 3z" fill="#c8c8c8"/><circle cx="4.5" cy="3" r="1.5" fill="#222"/></svg>
<div style="left:22.5px;top:463.34px;width:8.5px;height:9.219999999999999px;background:#1e1e1e;"></div>
<div style="left:32px;top:463.34px;width:8.5px;height:9.219999999999999px;background:#1e1e1e;"></div>
<span style="left:46.8px;top:463.45px;font-size:8.5px;line-height:10.20px;color:#808080;transform:scaleX(0.989);">›</span>
<div style="left:54px;top:463.65px;width:8px;height:8px;background:#b1acd4;"></div>
<span style="left:66px;top:463.09px;font-size:7.6px;line-height:9.12px;color:#b8b8b8;font-weight:bold;transform:scaleX(1.006);">14</span>
<svg style="left:79.5px;top:463.05px" width="8" height="9.4" viewBox="0 0 8 9.4"><rect x="0.4" y="0.4" width="7.2" height="8.6" rx="1" fill="#1d0a00" stroke="#c4601f" stroke-width="0.8"/><path d="M2.3 6.8L3.6 2.6h0.8L5.7 6.8M2.9 5.3h2.2" stroke="#e8742a" stroke-width="0.8" fill="none"/></svg>
<span style="left:91px;top:463.74px;font-size:7.6px;line-height:9.12px;color:#c6c6c6;font-weight:bold;transform:scaleX(0.824);">Left Arm</span>
<div style="left:247.5px;top:463.34px;width:41.5px;height:9.219999999999999px;background:#1b1b1b;"></div>
<span style="left:251px;top:463.53px;font-size:8px;line-height:9.60px;color:#cfcfcf;transform:scaleX(0.873);">Normal</span>
<svg style="left:281.5px;top:466.15px" width="6" height="4"><path d="M0.6 0.6L2.8 2.8L5 0.6" stroke="#999" stroke-width="0.8" fill="none"/></svg>
<div style="left:292.5px;top:463.34px;width:8.5px;height:9.219999999999999px;background:#1e1e1e;"></div>
<div style="left:305px;top:463.34px;width:40px;height:9.219999999999999px;background:#1b1b1b;"></div>
<span style="left:309px;top:463.53px;font-size:8px;line-height:9.60px;color:#cfcfcf;transform:scaleX(0.889);">None</span>
<svg style="left:337.5px;top:466.15px" width="6" height="4"><path d="M0.6 0.6L2.8 2.8L5 0.6" stroke="#999" stroke-width="0.8" fill="none"/></svg>
<svg style="left:351.5px;top:464.45px" width="26" height="7" viewBox="0 0 26 7"><path d="M0.5 4.2C0.5 0 6.5 0 6.5 4.2z" fill="#c0c0c0"/><path d="M1.6 4.2v2M3.5 0.8v5.4M5.4 4.2v2" stroke="#c0c0c0" stroke-width="0.8"/><path d="M3.5 0.8v3.4" stroke="#222" stroke-width="0.6"/><circle cx="12.6" cy="3.4" r="1.5" fill="none" stroke="#c0c0c0" stroke-width="0.8"/><path d="M12.6 0.4v1.4M12.6 5v1.4M9.6 3.4h1.4M14.2 3.4h1.4" stroke="#c0c0c0" stroke-width="0.8"/><path d="M19 6.4L24.4 0.6" stroke="#c8c8c8" stroke-width="0.9"/></svg>
<div style="left:399px;top:463.34px;width:8px;height:9.219999999999999px;background:#1e1e1e;"></div>
<div style="left:407.8px;top:463.34px;width:8px;height:9.219999999999999px;background:#1e1e1e;"></div>
<div style="left:416.6px;top:463.34px;width:8px;height:9.219999999999999px;background:#1e1e1e;"></div>
<span style="left:437.8px;top:462.91px;font-size:7.4px;line-height:8.88px;color:#a0a0a0;transform:scaleX(0.905);">@</span>
<div style="left:450px;top:463.34px;width:53.5px;height:9.219999999999999px;background:#1b1b1b;"></div>
<span style="left:453px;top:463.53px;font-size:8px;line-height:9.60px;color:#cfcfcf;transform:scaleX(0.863);">None</span>
<svg style="left:496px;top:466.15px" width="6" height="4"><path d="M0.6 0.6L2.8 2.8L5 0.6" stroke="#999" stroke-width="0.8" fill="none"/></svg>
<svg style="left:3.5px;top:475.27px" width="9" height="6" viewBox="0 0 9 6"><path d="M0.3 3C2 0.3 7 0.3 8.7 3C7 5.7 2 5.7 0.3 3z" fill="#c8c8c8"/><circle cx="4.5" cy="3" r="1.5" fill="#222"/></svg>
<div style="left:22.5px;top:473.96px;width:8.5px;height:9.219999999999999px;background:#1e1e1e;"></div>
<div style="left:32px;top:473.96px;width:8.5px;height:9.219999999999999px;background:#1e1e1e;"></div>
<span style="left:46.8px;top:474.07px;font-size:8.5px;line-height:10.20px;color:#808080;transform:scaleX(0.989);">›</span>
<div style="left:54px;top:474.27px;width:8px;height:8px;background:#b1acd4;"></div>
<span style="left:66px;top:473.71px;font-size:7.6px;line-height:9.12px;color:#b8b8b8;font-weight:bold;transform:scaleX(1.006);">15</span>
<svg style="left:79.5px;top:473.67px" width="8" height="9.4" viewBox="0 0 8 9.4"><rect x="0.4" y="0.4" width="7.2" height="8.6" rx="1" fill="#1d0a00" stroke="#c4601f" stroke-width="0.8"/><path d="M2.3 6.8L3.6 2.6h0.8L5.7 6.8M2.9 5.3h2.2" stroke="#e8742a" stroke-width="0.8" fill="none"/></svg>
<span style="left:91px;top:474.36px;font-size:7.6px;line-height:9.12px;color:#c6c6c6;font-weight:bold;transform:scaleX(0.853);">Right Thigh</span>
<div style="left:247.5px;top:473.96px;width:41.5px;height:9.219999999999999px;background:#1b1b1b;"></div>
<span style="left:251px;top:474.15px;font-size:8px;line-height:9.60px;color:#cfcfcf;transform:scaleX(0.873);">Normal</span>
<svg style="left:281.5px;top:476.77px" width="6" height="4"><path d="M0.6 0.6L2.8 2.8L5 0.6" stroke="#999" stroke-width="0.8" fill="none"/></svg>
<div style="left:292.5px;top:473.96px;width:8.5px;height:9.219999999999999px;background:#1e1e1e;"></div>
<div style="left:305px;top:473.96px;width:40px;height:9.219999999999999px;background:#1b1b1b;"></div>
<span style="left:309px;top:474.15px;font-size:8px;line-height:9.60px;color:#cfcfcf;transform:scaleX(0.889);">None</span>
<svg style="left:337.5px;top:476.77px" width="6" height="4"><path d="M0.6 0.6L2.8 2.8L5 0.6" stroke="#999" stroke-width="0.8" fill="none"/></svg>
<svg style="left:351.5px;top:475.07px" width="26" height="7" viewBox="0 0 26 7"><path d="M0.5 4.2C0.5 0 6.5 0 6.5 4.2z" fill="#c0c0c0"/><path d="M1.6 4.2v2M3.5 0.8v5.4M5.4 4.2v2" stroke="#c0c0c0" stroke-width="0.8"/><path d="M3.5 0.8v3.4" stroke="#222" stroke-width="0.6"/><circle cx="12.6" cy="3.4" r="1.5" fill="none" stroke="#c0c0c0" stroke-width="0.8"/><path d="M12.6 0.4v1.4M12.6 5v1.4M9.6 3.4h1.4M14.2 3.4h1.4" stroke="#c0c0c0" stroke-width="0.8"/><path d="M19 6.4L24.4 0.6" stroke="#c8c8c8" stroke-width="0.9"/></svg>
<div style="left:399px;top:473.96px;width:8px;height:9.219999999999999px;background:#1e1e1e;"></div>
<div style="left:407.8px;top:473.96px;width:8px;height:9.219999999999999px;background:#1e1e1e;"></div>
<div style="left:416.6px;top:473.96px;width:8px;height:9.219999999999999px;background:#1e1e1e;"></div>
<span style="left:437.8px;top:473.53px;font-size:7.4px;line-height:8.88px;color:#a0a0a0;transform:scaleX(0.905);">@</span>
<div style="left:450px;top:473.96px;width:53.5px;height:9.219999999999999px;background:#1b1b1b;"></div>
<span style="left:453px;top:474.15px;font-size:8px;line-height:9.60px;color:#cfcfcf;transform:scaleX(0.863);">None</span>
<svg style="left:496px;top:476.77px" width="6" height="4"><path d="M0.6 0.6L2.8 2.8L5 0.6" stroke="#999" stroke-width="0.8" fill="none"/></svg>
<svg style="left:3.5px;top:485.89px" width="9" height="6" viewBox="0 0 9 6"><path d="M0.3 3C2 0.3 7 0.3 8.7 3C7 5.7 2 5.7 0.3 3z" fill="#c8c8c8"/><circle cx="4.5" cy="3" r="1.5" fill="#222"/></svg>
<div style="left:22.5px;top:484.58px;width:8.5px;height:9.219999999999999px;background:#1e1e1e;"></div>
<div style="left:32px;top:484.58px;width:8.5px;height:9.219999999999999px;background:#1e1e1e;"></div>
<span style="left:46.8px;top:484.69px;font-size:8.5px;line-height:10.20px;color:#808080;transform:scaleX(0.989);">›</span>
<div style="left:54px;top:484.89px;width:8px;height:8px;background:#b1acd4;"></div>
<span style="left:66px;top:484.33px;font-size:7.6px;line-height:9.12px;color:#b8b8b8;font-weight:bold;transform:scaleX(1.006);">16</span>
<svg style="left:79.5px;top:484.29px" width="8" height="9.4" viewBox="0 0 8 9.4"><rect x="0.4" y="0.4" width="7.2" height="8.6" rx="1" fill="#1d0a00" stroke="#c4601f" stroke-width="0.8"/><path d="M2.3 6.8L3.6 2.6h0.8L5.7 6.8M2.9 5.3h2.2" stroke="#e8742a" stroke-width="0.8" fill="none"/></svg>
<span style="left:91px;top:484.98px;font-size:7.6px;line-height:9.12px;color:#c6c6c6;font-weight:bold;transform:scaleX(0.871);">Right Leg</span>
<div style="left:247.5px;top:484.58px;width:41.5px;height:9.219999999999999px;background:#1b1b1b;"></div>
<span style="left:251px;top:484.77px;font-size:8px;line-height:9.60px;color:#cfcfcf;transform:scaleX(0.873);">Normal</span>
<svg style="left:281.5px;top:487.39px" width="6" height="4"><path d="M0.6 0.6L2.8 2.8L5 0.6" stroke="#999" stroke-width="0.8" fill="none"/></svg>
<div style="left:292.5px;top:484.58px;width:8.5px;height:9.219999999999999px;background:#1e1e1e;"></div>
<div style="left:305px;top:484.58px;width:40px;height:9.219999999999999px;background:#1b1b1b;"></div>
<span style="left:309px;top:484.77px;font-size:8px;line-height:9.60px;color:#cfcfcf;transform:scaleX(0.889);">None</span>
<svg style="left:337.5px;top:487.39px" width="6" height="4"><path d="M0.6 0.6L2.8 2.8L5 0.6" stroke="#999" stroke-width="0.8" fill="none"/></svg>
<svg style="left:351.5px;top:485.69px" width="26" height="7" viewBox="0 0 26 7"><path d="M0.5 4.2C0.5 0 6.5 0 6.5 4.2z" fill="#c0c0c0"/><path d="M1.6 4.2v2M3.5 0.8v5.4M5.4 4.2v2" stroke="#c0c0c0" stroke-width="0.8"/><path d="M3.5 0.8v3.4" stroke="#222" stroke-width="0.6"/><circle cx="12.6" cy="3.4" r="1.5" fill="none" stroke="#c0c0c0" stroke-width="0.8"/><path d="M12.6 0.4v1.4M12.6 5v1.4M9.6 3.4h1.4M14.2 3.4h1.4" stroke="#c0c0c0" stroke-width="0.8"/><path d="M19 6.4L24.4 0.6" stroke="#c8c8c8" stroke-width="0.9"/></svg>
<div style="left:399px;top:484.58px;width:8px;height:9.219999999999999px;background:#1e1e1e;"></div>
<div style="left:407.8px;top:484.58px;width:8px;height:9.219999999999999px;background:#1e1e1e;"></div>
<div style="left:416.6px;top:484.58px;width:8px;height:9.219999999999999px;background:#1e1e1e;"></div>
<span style="left:437.8px;top:484.15px;font-size:7.4px;line-height:8.88px;color:#a0a0a0;transform:scaleX(0.905);">@</span>
<div style="left:450px;top:484.58px;width:53.5px;height:9.219999999999999px;background:#1b1b1b;"></div>
<span style="left:453px;top:484.77px;font-size:8px;line-height:9.60px;color:#cfcfcf;transform:scaleX(0.863);">None</span>
<svg style="left:496px;top:487.39px" width="6" height="4"><path d="M0.6 0.6L2.8 2.8L5 0.6" stroke="#999" stroke-width="0.8" fill="none"/></svg>
<svg style="left:3.5px;top:496.51px" width="9" height="6" viewBox="0 0 9 6"><path d="M0.3 3C2 0.3 7 0.3 8.7 3C7 5.7 2 5.7 0.3 3z" fill="#c8c8c8"/><circle cx="4.5" cy="3" r="1.5" fill="#222"/></svg>
<div style="left:22.5px;top:495.2px;width:8.5px;height:9.219999999999999px;background:#1e1e1e;"></div>
<div style="left:32px;top:495.2px;width:8.5px;height:9.219999999999999px;background:#1e1e1e;"></div>
<span style="left:46.8px;top:495.31px;font-size:8.5px;line-height:10.20px;color:#808080;transform:scaleX(0.989);">›</span>
<div style="left:54px;top:495.51px;width:8px;height:8px;background:#b1acd4;"></div>
<span style="left:66px;top:494.95px;font-size:7.6px;line-height:9.12px;color:#b8b8b8;font-weight:bold;transform:scaleX(1.006);">17</span>
<svg style="left:79.5px;top:494.91px" width="8" height="9.4" viewBox="0 0 8 9.4"><rect x="0.4" y="0.4" width="7.2" height="8.6" rx="1" fill="#1d0a00" stroke="#c4601f" stroke-width="0.8"/><path d="M2.3 6.8L3.6 2.6h0.8L5.7 6.8M2.9 5.3h2.2" stroke="#e8742a" stroke-width="0.8" fill="none"/></svg>
<span style="left:91px;top:495.60px;font-size:7.6px;line-height:9.12px;color:#c6c6c6;font-weight:bold;transform:scaleX(0.853);">Right shoe</span>
<div style="left:247.5px;top:495.2px;width:41.5px;height:9.219999999999999px;background:#1b1b1b;"></div>
<span style="left:251px;top:495.39px;font-size:8px;line-height:9.60px;color:#cfcfcf;transform:scaleX(0.873);">Normal</span>
<svg style="left:281.5px;top:498.01px" width="6" height="4"><path d="M0.6 0.6L2.8 2.8L5 0.6" stroke="#999" stroke-width="0.8" fill="none"/></svg>
<div style="left:292.5px;top:495.2px;width:8.5px;height:9.219999999999999px;background:#1e1e1e;"></div>
<div style="left:305px;top:495.2px;width:40px;height:9.219999999999999px;background:#1b1b1b;"></div>
<span style="left:309px;top:495.39px;font-size:8px;line-height:9.60px;color:#cfcfcf;transform:scaleX(0.889);">None</span>
<svg style="left:337.5px;top:498.01px" width="6" height="4"><path d="M0.6 0.6L2.8 2.8L5 0.6" stroke="#999" stroke-width="0.8" fill="none"/></svg>
<svg style="left:351.5px;top:496.31px" width="26" height="7" viewBox="0 0 26 7"><path d="M0.5 4.2C0.5 0 6.5 0 6.5 4.2z" fill="#c0c0c0"/><path d="M1.6 4.2v2M3.5 0.8v5.4M5.4 4.2v2" stroke="#c0c0c0" stroke-width="0.8"/><path d="M3.5 0.8v3.4" stroke="#222" stroke-width="0.6"/><circle cx="12.6" cy="3.4" r="1.5" fill="none" stroke="#c0c0c0" stroke-width="0.8"/><path d="M12.6 0.4v1.4M12.6 5v1.4M9.6 3.4h1.4M14.2 3.4h1.4" stroke="#c0c0c0" stroke-width="0.8"/><path d="M19 6.4L24.4 0.6" stroke="#c8c8c8" stroke-width="0.9"/></svg>
<div style="left:399px;top:495.2px;width:8px;height:9.219999999999999px;background:#1e1e1e;"></div>
<div style="left:407.8px;top:495.2px;width:8px;height:9.219999999999999px;background:#1e1e1e;"></div>
<div style="left:416.6px;top:495.2px;width:8px;height:9.219999999999999px;background:#1e1e1e;"></div>
<span style="left:437.8px;top:494.77px;font-size:7.4px;line-height:8.88px;color:#a0a0a0;transform:scaleX(0.905);">@</span>
<div style="left:450px;top:495.2px;width:53.5px;height:9.219999999999999px;background:#1b1b1b;"></div>
<span style="left:453px;top:495.39px;font-size:8px;line-height:9.60px;color:#cfcfcf;transform:scaleX(0.863);">None</span>
<svg style="left:496px;top:498.01px" width="6" height="4"><path d="M0.6 0.6L2.8 2.8L5 0.6" stroke="#999" stroke-width="0.8" fill="none"/></svg>
<svg style="left:3.5px;top:507.13px" width="9" height="6" viewBox="0 0 9 6"><path d="M0.3 3C2 0.3 7 0.3 8.7 3C7 5.7 2 5.7 0.3 3z" fill="#c8c8c8"/><circle cx="4.5" cy="3" r="1.5" fill="#222"/></svg>
<div style="left:22.5px;top:505.82px;width:8.5px;height:9.219999999999999px;background:#1e1e1e;"></div>
<div style="left:32px;top:505.82px;width:8.5px;height:9.219999999999999px;background:#1e1e1e;"></div>
<span style="left:46.8px;top:505.93px;font-size:8.5px;line-height:10.20px;color:#808080;transform:scaleX(0.989);">›</span>
<div style="left:54px;top:506.13px;width:8px;height:8px;background:#b1acd4;"></div>
<span style="left:66px;top:505.57px;font-size:7.6px;line-height:9.12px;color:#b8b8b8;font-weight:bold;transform:scaleX(1.006);">18</span>
<svg style="left:79.5px;top:505.53px" width="8" height="9.4" viewBox="0 0 8 9.4"><rect x="0.4" y="0.4" width="7.2" height="8.6" rx="1" fill="#1d0a00" stroke="#c4601f" stroke-width="0.8"/><path d="M2.3 6.8L3.6 2.6h0.8L5.7 6.8M2.9 5.3h2.2" stroke="#e8742a" stroke-width="0.8" fill="none"/></svg>
<span style="left:91px;top:506.22px;font-size:7.6px;line-height:9.12px;color:#c6c6c6;font-weight:bold;transform:scaleX(0.862);">Lthigh</span>
<div style="left:247.5px;top:505.82px;width:41.5px;height:9.219999999999999px;background:#1b1b1b;"></div>
<span style="left:251px;top:506.01px;font-size:8px;line-height:9.60px;color:#cfcfcf;transform:scaleX(0.873);">Normal</span>
<svg style="left:281.5px;top:508.63px" width="6" height="4"><path d="M0.6 0.6L2.8 2.8L5 0.6" stroke="#999" stroke-width="0.8" fill="none"/></svg>
<div style="left:292.5px;top:505.82px;width:8.5px;height:9.219999999999999px;background:#1e1e1e;"></div>
<div style="left:305px;top:505.82px;width:40px;height:9.219999999999999px;background:#1b1b1b;"></div>
<span style="left:309px;top:506.01px;font-size:8px;line-height:9.60px;color:#cfcfcf;transform:scaleX(0.889);">None</span>
<svg style="left:337.5px;top:508.63px" width="6" height="4"><path d="M0.6 0.6L2.8 2.8L5 0.6" stroke="#999" stroke-width="0.8" fill="none"/></svg>
<svg style="left:351.5px;top:506.93px" width="26" height="7" viewBox="0 0 26 7"><path d="M0.5 4.2C0.5 0 6.5 0 6.5 4.2z" fill="#c0c0c0"/><path d="M1.6 4.2v2M3.5 0.8v5.4M5.4 4.2v2" stroke="#c0c0c0" stroke-width="0.8"/><path d="M3.5 0.8v3.4" stroke="#222" stroke-width="0.6"/><circle cx="12.6" cy="3.4" r="1.5" fill="none" stroke="#c0c0c0" stroke-width="0.8"/><path d="M12.6 0.4v1.4M12.6 5v1.4M9.6 3.4h1.4M14.2 3.4h1.4" stroke="#c0c0c0" stroke-width="0.8"/><path d="M19 6.4L24.4 0.6" stroke="#c8c8c8" stroke-width="0.9"/></svg>
<div style="left:399px;top:505.82px;width:8px;height:9.219999999999999px;background:#1e1e1e;"></div>
<div style="left:407.8px;top:505.82px;width:8px;height:9.219999999999999px;background:#1e1e1e;"></div>
<div style="left:416.6px;top:505.82px;width:8px;height:9.219999999999999px;background:#1e1e1e;"></div>
<span style="left:437.8px;top:505.39px;font-size:7.4px;line-height:8.88px;color:#a0a0a0;transform:scaleX(0.905);">@</span>
<div style="left:450px;top:505.82px;width:53.5px;height:9.219999999999999px;background:#1b1b1b;"></div>
<span style="left:453px;top:506.01px;font-size:8px;line-height:9.60px;color:#cfcfcf;transform:scaleX(0.863);">None</span>
<svg style="left:496px;top:508.63px" width="6" height="4"><path d="M0.6 0.6L2.8 2.8L5 0.6" stroke="#999" stroke-width="0.8" fill="none"/></svg>
<div style="left:0px;top:337px;width:1.6px;height:190px;background:#1f3655;"></div>
<div style="left:958.4px;top:337px;width:1.6px;height:190px;background:#1f3655;"></div>
<div style="left:521px;top:357.8px;width:424px;height:5.2px;background:#5a5a5a;"></div>
<div style="left:521px;top:363px;width:424px;height:13px;background:#1e1e1e;"></div>
<div style="left:521px;top:376px;width:424px;height:9.2px;background:#5d5d5d;"></div>
<div style="left:521px;top:385.2px;width:424px;height:2.8px;background:#2f8f3c;"></div>
<div style="left:521px;top:388.2px;width:423.5px;height:127.2px;background:#76788b;"></div>
<div style="left:521px;top:398.32px;width:423.5px;height:1.1px;background:#3b3d50;"></div>
<div style="left:521px;top:408.94px;width:423.5px;height:1.1px;background:#3b3d50;"></div>
<div style="left:521px;top:419.56px;width:423.5px;height:1.1px;background:#3b3d50;"></div>
<div style="left:521px;top:430.18px;width:423.5px;height:1.1px;background:#3b3d50;"></div>
<div style="left:521px;top:440.79999999999995px;width:423.5px;height:1.1px;background:#3b3d50;"></div>
<div style="left:521px;top:451.41999999999996px;width:423.5px;height:1.1px;background:#3b3d50;"></div>
<div style="left:521px;top:462.03999999999996px;width:423.5px;height:1.1px;background:#3b3d50;"></div>
<div style="left:521px;top:472.65999999999997px;width:423.5px;height:1.1px;background:#3b3d50;"></div>
<div style="left:521px;top:483.28px;width:423.5px;height:1.1px;background:#3b3d50;"></div>
<div style="left:521px;top:493.9px;width:423.5px;height:1.1px;background:#3b3d50;"></div>
<div style="left:521px;top:504.52px;width:423.5px;height:1.1px;background:#3b3d50;"></div>
<div style="left:521px;top:431.28000000000003px;width:423.5px;height:9.52px;background:#a9a9cf;background:linear-gradient(#aaaaca,#9f9fc4 45%,#8f8eb2);"></div>
<div style="left:945px;top:388px;width:13.4px;height:128px;background:#232323;"></div>
<div style="left:518px;top:431.08px;width:3px;height:10.02px;background:#363636;"></div>
<div style="left:944.6px;top:431.08px;width:5px;height:10.02px;background:#363636;"></div>
<div style="left:949.8px;top:427px;width:5.6px;height:60px;background:#343434;border-radius:3px;"></div>
<div style="left:521.5px;top:388px;width:0.9px;height:128px;background:#3a6aa8;"></div>
<span style="left:567.0px;top:364.80px;font-size:6.6px;line-height:7.92px;color:#9a9a9a;transform:scaleX(0.987);">05s</span>
<div style="left:572.2px;top:373.2px;width:0.8px;height:1.6px;background:#888;"></div>
<span style="left:617.5px;top:364.80px;font-size:6.6px;line-height:7.92px;color:#9a9a9a;transform:scaleX(0.987);">10s</span>
<div style="left:622.7px;top:373.2px;width:0.8px;height:1.6px;background:#888;"></div>
<span style="left:668.5px;top:364.80px;font-size:6.6px;line-height:7.92px;color:#9a9a9a;transform:scaleX(0.987);">15s</span>
<div style="left:673.7px;top:373.2px;width:0.8px;height:1.6px;background:#888;"></div>
<span style="left:719.0px;top:364.80px;font-size:6.6px;line-height:7.92px;color:#9a9a9a;transform:scaleX(0.987);">20s</span>
<div style="left:724.2px;top:373.2px;width:0.8px;height:1.6px;background:#888;"></div>
<span style="left:770.0px;top:364.80px;font-size:6.6px;line-height:7.92px;color:#9a9a9a;transform:scaleX(0.987);">25s</span>
<div style="left:775.2px;top:373.2px;width:0.8px;height:1.6px;background:#888;"></div>
<span style="left:820.5px;top:364.80px;font-size:6.6px;line-height:7.92px;color:#9a9a9a;transform:scaleX(0.987);">30s</span>
<div style="left:825.7px;top:373.2px;width:0.8px;height:1.6px;background:#888;"></div>
<span style="left:871.5px;top:364.80px;font-size:6.6px;line-height:7.92px;color:#9a9a9a;transform:scaleX(0.987);">35s</span>
<div style="left:876.7px;top:373.2px;width:0.8px;height:1.6px;background:#888;"></div>
<span style="left:922.0px;top:364.80px;font-size:6.6px;line-height:7.92px;color:#9a9a9a;transform:scaleX(0.987);">40s</span>
<div style="left:927.2px;top:373.2px;width:0.8px;height:1.6px;background:#888;"></div>
<span style="left:524px;top:364.80px;font-size:6.6px;line-height:7.92px;color:#9a9a9a;transform:scaleX(0.861);">0s</span>
<svg style="left:516px;top:356px" width="12" height="32" viewBox="0 0 12 32"><rect x="4.2" y="1.6" width="3.6" height="5.8" rx="1.6" fill="#3b8de0"/><path d="M2 10h8v3.6L6 18L2 13.6z" fill="#3b8de0"/><rect x="4.4" y="20" width="2.8" height="9.4" rx="1" fill="#3b8de0"/><path d="M6 18v14" stroke="#3b8de0" stroke-width="0.8"/></svg>
<svg style="left:940px;top:356px" width="20" height="40" viewBox="0 0 20 40"><rect x="3.6" y="1.6" width="3.6" height="5.8" rx="1.6" fill="#3b8de0"/><rect x="4.6" y="20" width="2.8" height="9.6" rx="1" fill="#3b8de0"/><path d="M9.6 20.4h7v5.6l-3.5 3.6l-3.5 -3.6z" fill="#d8d8d8"/><path d="M9 37.5l3.4-3.6l2 2.2l-3.2 3.2zM13.5 34.5h3.8v3.6h-2z" fill="#d0d0d0"/></svg>
<div style="left:0px;top:515.6px;width:960px;height:10.7px;background:#1e1e1e;"></div>
<svg style="left:520px;top:517px" width="64" height="9" viewBox="0 0 64 9"><path d="M1 5.4L4 3.4L7 5.4z" fill="#bbb"/><circle cx="16.5" cy="4.6" r="2.6" fill="none" stroke="#c8c8c8" stroke-width="1"/><path d="M20 4.6h24" stroke="#444" stroke-width="0.8"/><path d="M51 6.4L55 1.8L57.4 4.4L59 2.8L62 6.4z" fill="#ccc"/></svg>
<svg style="left:3px;top:516.5px" width="36" height="9" viewBox="0 0 36 9"><g fill="none" stroke="#3b8de0" stroke-width="1"><rect x="0.8" y="1" width="4.4" height="4.4"/><rect x="2.8" y="3" width="4.4" height="4.4" fill="#1d4a80"/><circle cx="15" cy="3.6" r="2.4"/><circle cx="17.4" cy="5.6" r="2.4"/><path d="M26 1.2c-1.6 0 -0.4 3 -2 3.2c1.6 0.2 0.4 3.2 2 3.2M30 1.2c1.6 0 0.4 3 2 3.2c-1.6 0.2 -0.4 3.2 -2 3.2"/></g></svg>
<span style="left:696.5px;top:465.86px;font-size:32.5px;line-height:39.00px;color:#ececec;transform:scaleX(1.140);text-shadow:0 0 1.6px #2a2a33,0 0.5px 1px #333;">www.</span>
<span style="left:785.5px;top:465.86px;font-size:32.5px;line-height:39.00px;color:#ececec;transform:scaleX(0.980);text-shadow:0 0 1.6px #2a2a33,0 0.5px 1px #333;">hunls</span>
<span style="left:862px;top:465.86px;font-size:32.5px;line-height:39.00px;color:#ececec;transform:scaleX(1.008);text-shadow:0 0 1.6px #2a2a33,0 0.5px 1px #333;">.com</span>
<svg style="left:0px;top:40px" width="400" height="16" viewBox="0 0 400 16">
<g fill="#c8c8c8" stroke="none">
<path d="M14.5 3.2L9.2 8h1.5v4.2h2.6V9.4h2.4v2.8h2.6V8h1.5z"/>
<path d="M31 2.6v9.6l2.6-2.4l5 0.2z"/>
<path d="M44.4 7.6l1.400-0.600l1.300 1.800V3.800a0.700 0.700 0 0 1 1.400 0V6.800V2.900a0.700 0.700 0 0 1 1.400 0V6.600V3.200a0.700 0.700 0 0 1 1.400 0V6.800V4.400a0.700 0.700 0 0 1 1.400 0V9.400c0 2.200-1.400 3.800-3.600 3.800c-1.800 0-2.900-1-3.600-2.600z" stroke="#c8c8c8" stroke-width="0.500"/>
</g>
<g fill="none" stroke="#c8c8c8" stroke-width="1.1">
<circle cx="63.6" cy="5.8" r="2.8"/><path d="M65.8 8l3.4 3.8" stroke-width="1.4"/>
<path d="M82.6 4.6a3.6 3.6 0 1 1 -1 4.4" stroke="#aaa"/>
</g>
<path d="M80.4 3.4l3.4-0.4l-0.8 3.2z" fill="#aaa"/>
<path d="M95.6 5.2h6.2v5.6h-6.2zM102 7.4l2.6-1.8v4.8l-2.6-1.8z" fill="#555"/>
<rect x="111.6" y="2.4" width="11" height="10.6" fill="#12264a"/>
<g fill="#2f6fc0"><rect x="112.6" y="3.4" width="1.6" height="1.6"/><rect x="116.4" y="3.4" width="1.6" height="1.6"/><rect x="120" y="3.4" width="1.6" height="1.6"/><rect x="112.6" y="7" width="1.6" height="1.6"/><rect x="120" y="7" width="1.6" height="1.6"/><rect x="112.6" y="10.4" width="1.6" height="1.6"/><rect x="116.4" y="10.4" width="1.6" height="1.6"/><rect x="120" y="10.4" width="1.6" height="1.6"/><path d="M115.4 6.2l1.8 1.6l1.8-1.6M115.4 9.6l1.8-1.6l1.8 1.6" stroke="#2f6fc0" stroke-width="0.7" fill="none"/></g>
<rect x="132.4" y="3.4" width="9" height="8.4" fill="#555" stroke="#bbb" stroke-width="1"/>
<path d="M142.4 11.4v1.6h-1.6z" fill="#bbb"/>
<path d="M148 12.2l1-4.2l4-4.6l3 2.8l-4.2 4.4zM153.6 3l1.4-1.2l2.8 2.6l-1.2 1.4z" fill="#c8c8c8"/><circle cx="151.4" cy="9" r="0.9" fill="#222"/><rect x="156.6" y="12" width="1.2" height="1.2" fill="#bbb"/>
<path d="M173 12.4v-1.2h1.2" fill="none" stroke="#bbb" stroke-width="0.8"/>
<g fill="#c8c8c8">
<path d="M181.4 12.6c0-2.4 1.4-3.6 2.8-3.4l1.4 1.4c0 1.6-2 2.6-4.200 2zM184.800 8.400l4.800-5.800l1.200 1l-4.600 6z"/>
<path d="M198.400 12.600h9.400v-2h-9.400zM200 10v-1.400h2.200l-0.600-3.600a1.500 1.700 0 1 1 3 0l-0.600 3.600h2.200v1.400z"/>
<path d="M213.800 8.200l5-5l4.600 4.400l-5 5.200h-2.400z"/>
<path d="M236 3.400a1.100 1.100 0 1 1 0.010 0zM233.600 5.400h4.400v1h-1.400l1.400 5.800h-1.200l-1-3.600l-1.200 3.600h-1.200l1.600-5.800h-1.400zM239.600 10.200l5-6.400l1 0.800l-4.800 6.400zM238.400 11l1.800 0.800l-1.400 1.200c-0.800 0-1-1-0.400-2z"/>
<path d="M258.600 2.400l4.800 4.400l-1.400 0.400l-1.800 2l0.200 2.200l-2.400-2.200l-3.200 3.600l-0.400-0.400l3.200-3.400l-2.400-2.200l2.400-0.200l1.600-2z"/>
</g>
<rect x="245.600" y="12" width="1.200" height="1.200" fill="#bbb"/><rect x="264.600" y="12" width="1.200" height="1.200" fill="#bbb"/>
<rect x="282.600" y="2" width="0.800" height="12" fill="#3a3a3a"/>
<rect x="304.400" y="3.400" width="8" height="8.400" fill="none" stroke="#bdbdbd" stroke-width="1"/>
<path d="M349.400 11.400l2-3.400l3.400-2.600M356.400 3.600l-2.200 0.400l1.800 1.800zM349 12l1.600-0.400" stroke="#999" stroke-width="1" fill="none"/>
<g stroke="#1f4f8c" stroke-width="0.900" fill="none"><path d="M366 3.400l2.600 2.600M374.400 3.400l-2.600 2.600M366 12l2.600-2.600M374.400 12l-2.600-2.600"/><rect x="369" y="6.400" width="2.400" height="2.400"/><path d="M365.400 5.400v-2.600h2.600M372.400 2.800h2.600v2.600M365.400 10v2.600h2.600M372.400 12.600h2.600v-2.600"/></g>
</svg>
<span style="left:163.5px;top:39.60px;font-size:13px;line-height:15.60px;color:#c8c8c8;font-weight:bold;transform:scaleX(1.008);font-family:'Liberation Serif',serif;">T</span>
<span style="left:314.5px;top:43.69px;font-size:7.6px;line-height:9.12px;color:#8a8a8a;transform:scaleX(0.887);">Snapping</span>
<span style="left:526px;top:43.79px;font-size:7.4px;line-height:8.88px;color:#2d6fc0;transform:scaleX(0.960);">Default</span>
<svg style="left:555.5px;top:45px" width="6" height="6"><path d="M0 0.700h5.200M0 2.700h5.200M0 4.700h5.200" stroke="#2f6db5" stroke-width="0.800"/></svg>
<span style="left:577px;top:43.79px;font-size:7.4px;line-height:8.88px;color:#8a8a8a;transform:scaleX(0.898);">Learn</span>
<span style="left:622.5px;top:43.79px;font-size:7.4px;line-height:8.88px;color:#8a8a8a;transform:scaleX(0.932);">Standard</span>
<span style="left:678.5px;top:43.79px;font-size:7.4px;line-height:8.88px;color:#8a8a8a;transform:scaleX(0.886);">Small Screen</span>
<span style="left:747px;top:43.79px;font-size:7.4px;line-height:8.88px;color:#8a8a8a;transform:scaleX(0.934);">Libraries</span>
<span style="left:799.5px;top:41.60px;font-size:10px;line-height:12.00px;color:#d0d0d0;font-weight:bold;transform:scaleX(1.169);">»</span>
<svg style="left:816px;top:43.500px" width="12" height="8"><rect x="0.400" y="0.400" width="10.800" height="7" rx="0.800" fill="#cfcfcf"/><rect x="2" y="2.200" width="3.200" height="3" fill="#222"/><path d="M6.400 3h3.200M6.400 4.600h3.200" stroke="#222" stroke-width="0.800"/></svg>
<div style="left:836px;top:42px;width:120px;height:11.5px;background:#1a1a1a;border-radius:1px;"></div>
<svg style="left:839px;top:43.500px" width="9" height="9"><circle cx="5" cy="3.400" r="2.200" fill="none" stroke="#bbb" stroke-width="0.900"/><path d="M3.500 5.100L1.200 7.800" stroke="#bbb" stroke-width="1"/></svg>
<span style="left:853.5px;top:43.89px;font-size:7.6px;line-height:9.12px;color:#c4c4c4;transform:scaleX(0.885);">Search Help</span>
<span style="left:8.5px;top:60.98px;font-size:7.8px;line-height:9.36px;color:#d6d6d6;transform:scaleX(0.906);">Project</span>
<svg style="left:37.500px;top:62.300px" width="6" height="6"><path d="M0 0.700h5.400M0 2.700h5.400M0 4.700h5.400" stroke="#aaa" stroke-width="0.800"/></svg>
<div style="left:8px;top:71.4px;width:35.5px;height:1.2px;background:#b0b0b0;"></div>
<div style="left:65px;top:61.3px;width:6.8px;height:6.5px;background:#b1acd4;"></div>
<span style="left:78.5px;top:61.09px;font-size:7.6px;line-height:9.12px;color:#858585;transform:scaleX(0.935);">Effect Controls Guitar front line</span>
<div style="left:5px;top:78.7px;width:69.3px;height:38.7px;background:#000000;"></div>
<svg style="left:5px;top:78.700px" width="69.300" height="38.700" viewBox="0 0 70 40"><g>
<path d="M33.500 16l-2.500 5l-4.500 7l-1.500 4.500M35 16l1 7l0.800 8.500" stroke="#3a1414" stroke-width="1.800" fill="none" opacity="0.800"/>
<path d="M33.200 6.200l2.600 0.200l0.400 9.600l-3.400 0.400z" fill="#e4dada"/>
<path d="M32.800 6.800l-4.400 3.400l0.800 4" stroke="#d98058" stroke-width="1.500" fill="none"/>
<path d="M25.200 13.800c1.500-2.200 5-1.800 7-2.600l2.400 1.600c-0.800 3.200-4.200 5.400-7.600 5.200c-2-0.400-2.600-2.400-1.800-4.200z" fill="#d42626"/>
<path d="M25.200 13.800c1.500-2.200 5-1.800 7-2.600l2.400 1.600c-0.800 3.200-4.200 5.400-7.600 5.200c-2-0.400-2.600-2.400-1.800-4.200z" fill="none" stroke="#d42626" stroke-width="1.600" opacity="0.350"/>
<path d="M33.500 14.800l9.500-1.600" stroke="#8a5a5a" stroke-width="1.100"/>
<circle cx="35" cy="4.600" r="1.500" fill="#b8704c"/><path d="M33.400 4.200c0-2.200 3.600-2.600 3.800 0z" fill="#1a1010"/>
</g></svg>
<span style="left:78.5px;top:76.69px;font-size:7.4px;line-height:8.88px;color:#d8d8d8;font-weight:bold;transform:scaleX(0.837);">Rockstar</span>
<svg style="left:108.500px;top:78.800px" width="7" height="5"><path d="M0.600 0.800h5.400L3.300 4z" fill="#e0e0e0"/></svg>
<span style="left:78.5px;top:85.70px;font-size:6.4px;line-height:7.68px;color:#a0a0a0;transform:scaleX(0.977);">1920 x 1080 (1.00)</span>
<span style="left:78.5px;top:93.70px;font-size:6.4px;line-height:7.68px;color:#a0a0a0;transform:scaleX(0.957);">Δ 0:00:41:15, 25.00 fps</span>
<div style="left:5px;top:144.2px;width:219.5px;height:11px;background:#151515;border-radius:1px;"></div>
<svg style="left:8px;top:145.800px" width="12" height="8"><circle cx="4.600" cy="3" r="2.100" fill="none" stroke="#bbb" stroke-width="0.900"/><path d="M3.200 4.600L1.200 7" stroke="#bbb" stroke-width="1"/><path d="M7.400 5.600h2.400l-1.200 1.300z" fill="#bbb"/></svg>
<div style="left:0px;top:161.2px;width:228.5px;height:10.8px;background:#2d2d2d;"></div>
<div style="left:140.3px;top:161.2px;width:0.8px;height:10.8px;background:#1c1c1c;"></div>
<div style="left:153.6px;top:161.2px;width:0.8px;height:10.8px;background:#1c1c1c;"></div>
<div style="left:224px;top:161.2px;width:0.8px;height:10.8px;background:#1c1c1c;"></div>
<span style="left:15px;top:163.81px;font-size:5.8px;line-height:6.96px;color:#8a8a8a;transform:scaleX(0.937);">Name</span>
<svg style="left:130px;top:164px" width="10" height="6"><path d="M0.600 0.800h8l-4 4z" fill="#2567b4"/></svg>
<svg style="left:143.500px;top:162.500px" width="9" height="9" viewBox="0 0 9 9"><path d="M0.800 0.800h3.400l4 4l-3.400 3.400l-4-4z" fill="#c8c8c8"/><circle cx="2.400" cy="2.400" r="0.800" fill="#2d2d2d"/></svg>
<span style="left:157px;top:163.81px;font-size:5.8px;line-height:6.96px;color:#8a8a8a;transform:scaleX(0.975);">Comment</span>
<span style="left:226px;top:163.32px;font-size:5.8px;line-height:6.96px;color:#8a8a8a;transform:scaleX(0.706);">T</span>
<span style="left:3.5px;top:172.60px;font-size:8px;line-height:9.60px;color:#777;transform:scaleX(0.939);">›</span>
<svg style="left:11.5px;top:174.5px" width="9" height="7" viewBox="0 0 9 7"><path d="M0.300 0.300h3.200l0.800 1h4.400v5.400h-8.400z" fill="#c4c4c4"/></svg>
<span style="left:23.5px;top:173.98px;font-size:7.8px;line-height:9.36px;color:#a8a8a8;transform:scaleX(0.871);">Solids</span>
<div style="left:144px;top:174.8px;width:6px;height:6px;background:#e3d04c;"></div>
<span style="left:3.5px;top:184.60px;font-size:8px;line-height:9.60px;color:#777;transform:scaleX(0.939);">›</span>
<svg style="left:11.5px;top:186.5px" width="9" height="7" viewBox="0 0 9 7"><path d="M0.300 0.300h3.200l0.800 1h4.400v5.400h-8.400z" fill="#c4c4c4"/></svg>
<span style="left:23.5px;top:185.98px;font-size:7.8px;line-height:9.36px;color:#a8a8a8;transform:scaleX(0.843);">Rockstar Layers</span>
<div style="left:144px;top:186.8px;width:6px;height:6px;background:#e3d04c;"></div>
<div style="left:0px;top:196.2px;width:216.5px;height:11.3px;background:#383838;"></div>
<div style="left:22px;top:196.2px;width:118px;height:11.3px;background:#b4b4b4;"></div>
<svg style="left:11.500px;top:198px" width="9" height="8" viewBox="0 0 9 8"><rect x="0.400" y="0.400" width="8.200" height="7" fill="#555" stroke="#bbb" stroke-width="0.800"/><path d="M2 2.400h5M2 4h5M2 5.600h5" stroke="#ccc" stroke-width="0.700"/></svg>
<span style="left:23.5px;top:197.98px;font-size:7.8px;line-height:9.36px;color:#111;transform:scaleX(0.894);">Rockstar</span>
<div style="left:144px;top:198.8px;width:6px;height:6px;background:#b5aa8a;"></div>
<svg style="left:217.500px;top:173.200px" width="10" height="10" viewBox="0 0 10 10"><g fill="#c4c4c4"><rect x="3.400" y="0.500" width="3.200" height="3"/><rect x="0.400" y="6" width="3.200" height="3"/><rect x="6.400" y="6" width="3.200" height="3"/></g><path d="M5 3.500v1.500M2 6V5h6v1" stroke="#c4c4c4" stroke-width="0.800" fill="none"/></svg>
<div style="left:0px;top:321.2px;width:229px;height:14.3px;background:#1c1c1c;"></div>
<svg style="left:0px;top:321px" width="160" height="13" viewBox="0 0 160 13">
<g fill="#c4c4c4"><path d="M3.500 4.500h6v1h-6zM3.500 6.400h6v3.400h-6zM5.500 3h6v4.800h-1.400v-3.800h-4.600z"/>
<path d="M19.500 3.400h3l0.800 1h4.200v5h-8z"/>
<path d="M34.500 3.200h9v6.800h-9z"/><path d="M102.500 4.200h5.400l-0.500 6h-4.400zM102 3h6.400v0.900h-6.400zM104 2.200h2.400v0.800h-2.400z" fill="#8a8a8a"/>
<path d="M52 9.600l2.400-1l4-5l0.600 0.400l-3 5.400l-1 2l-1-1.200z"/></g>
<path d="M36 4.600h6v4h-6z" fill="#444"/><path d="M37 5.600h4M37 7.400h4" stroke="#ccc" stroke-width="0.700"/>
<rect x="110.500" y="2.400" width="44.500" height="8.400" rx="3" fill="#383838"/></svg>
<span style="left:71.5px;top:325.21px;font-size:6.2px;line-height:7.44px;color:#7a7a7a;transform:scaleX(0.791);">8 bpc</span>
<span style="left:242.5px;top:58.70px;font-size:9.5px;line-height:11.40px;color:#d0d0d0;font-weight:bold;transform:scaleX(1.325);">»</span>
<svg style="left:237px;top:84.500px" width="6" height="5"><path d="M0.600 0.800L2.600 3L4.600 0.800" stroke="#bbb" stroke-width="0.800" fill="none"/></svg>
<span style="left:242px;top:82.78px;font-size:7.8px;line-height:9.36px;color:#d8d8d8;transform:scaleX(0.872);">Brc</span>
<div style="left:241px;top:92.3px;width:10.5px;height:1.2px;background:#c0c0c0;"></div>
<div style="left:243px;top:103.5px;width:4.5px;height:4.5px;background:#080808;border-radius:3px;"></div>
<div style="left:240px;top:118px;width:13px;height:12px;background:#282828;"></div>
<span style="left:243px;top:120.09px;font-size:7.6px;line-height:9.12px;color:#9a9a9a;transform:scaleX(0.987);">Pr</span>
<div style="left:240px;top:141px;width:13px;height:12px;background:#282828;"></div>
<span style="left:243px;top:143.09px;font-size:7.6px;line-height:9.12px;color:#9a9a9a;transform:scaleX(0.987);">Pr</span>
<div style="left:240px;top:165px;width:13px;height:12px;background:#282828;"></div>
<span style="left:243px;top:167.09px;font-size:7.6px;line-height:9.12px;color:#9a9a9a;transform:scaleX(0.807);">So</span>
<div style="left:240px;top:188px;width:13px;height:12px;background:#282828;"></div>
<span style="left:243px;top:190.09px;font-size:7.6px;line-height:9.12px;color:#9a9a9a;transform:scaleX(0.807);">Us</span>
<div style="left:240px;top:213px;width:13px;height:12px;background:#282828;"></div>
<span style="left:243px;top:215.09px;font-size:7.6px;line-height:9.12px;color:#9a9a9a;transform:scaleX(0.987);">Tc</span>
<div style="left:240px;top:260px;width:13px;height:12px;background:#282828;"></div>
<span style="left:243px;top:262.09px;font-size:7.6px;line-height:9.12px;color:#9a9a9a;transform:scaleX(0.740);">Mc</span>
<span style="left:243.5px;top:130.10px;font-size:9.5px;line-height:11.40px;color:#9a9a9a;font-weight:bold;transform:scaleX(1.043);">›</span>
<span style="left:243.5px;top:153.60px;font-size:9.5px;line-height:11.40px;color:#9a9a9a;font-weight:bold;transform:scaleX(1.043);">›</span>
<span style="left:243.5px;top:177.10px;font-size:9.5px;line-height:11.40px;color:#9a9a9a;font-weight:bold;transform:scaleX(1.043);">›</span>
<span style="left:242.7px;top:316.49px;font-size:7.6px;line-height:9.12px;color:#d0d0d0;font-weight:bold;transform:scaleX(0.759);">Pre</span>
<div style="left:253px;top:56.9px;width:3px;height:277.6px;background:#1c1c1c;"></div>
<span style="left:262.5px;top:60.80px;font-size:7px;line-height:8.40px;color:#666;transform:scaleX(0.734);">×</span>
<div style="left:271.7px;top:61.5px;width:6.3px;height:6px;background:#c8b79a;"></div>
<svg style="left:284px;top:59.500px" width="7" height="8" viewBox="0 0 7 8"><rect x="0.600" y="3.400" width="5.400" height="4.200" fill="#e0e0e0"/><path d="M1.800 3.400V2a1.500 1.500 0 0 1 3 0v0.600" fill="none" stroke="#e0e0e0" stroke-width="0.900"/><rect x="2.600" y="4.800" width="1.400" height="1.600" fill="#222"/></svg>
<span style="left:296px;top:61.09px;font-size:7.6px;line-height:9.12px;color:#9a9a9a;transform:scaleX(0.923);">Composition</span>
<span style="left:337px;top:61.09px;font-size:7.6px;line-height:9.12px;color:#3b8de0;transform:scaleX(0.867);">Rockstar</span>
<svg style="left:370.500px;top:62.300px" width="6" height="6"><path d="M0 0.700h5.400M0 2.700h5.400M0 4.700h5.400" stroke="#aaa" stroke-width="0.800"/></svg>
<div style="left:262px;top:71.4px;width:115px;height:1.2px;background:#a8a8a8;"></div>
<span style="left:399px;top:61.19px;font-size:7.4px;line-height:8.88px;color:#7d7d7d;transform:scaleX(0.943);">Layer  (none)</span>
<div style="left:268px;top:76.5px;width:47px;height:10.5px;background:#191919;border-radius:1.500px;"></div>
<span style="left:273.5px;top:77.79px;font-size:7.4px;line-height:8.88px;color:#2f74c4;transform:scaleX(0.908);">Rockstar</span>
<span style="left:831px;top:61.48px;font-size:7.8px;line-height:9.36px;color:#d2d2d2;transform:scaleX(0.912);">Anchor Point Mover</span>
<svg style="left:899.500px;top:62.800px" width="6" height="6"><path d="M0 0.700h5M0 2.700h5M0 4.700h5" stroke="#aaa" stroke-width="0.800"/></svg>
<div style="left:834px;top:85px;width:45.5px;height:45.5px;background:#1b1b1b;border:0.800px dotted #606060;"></div>
<svg style="left:836.7px;top:88px" width="10" height="10" viewBox="-5 -5 10 10"><g transform="rotate(-45)"><path d="M0 -5L4.200 -0.400H1.400V4.800H-1.400V-0.400H-4.200z" fill="#f4f4f4"/></g></svg>
<svg style="left:851.7px;top:88px" width="10" height="10" viewBox="-5 -5 10 10"><g transform="rotate(0)"><path d="M0 -5L4.200 -0.400H1.400V4.800H-1.400V-0.400H-4.200z" fill="#f4f4f4"/></g></svg>
<svg style="left:866.7px;top:88px" width="10" height="10" viewBox="-5 -5 10 10"><g transform="rotate(45)"><path d="M0 -5L4.200 -0.400H1.400V4.800H-1.400V-0.400H-4.200z" fill="#f4f4f4"/></g></svg>
<svg style="left:836.7px;top:102.8px" width="10" height="10" viewBox="-5 -5 10 10"><g transform="rotate(-90)"><path d="M0 -5L4.200 -0.400H1.400V4.800H-1.400V-0.400H-4.200z" fill="#f4f4f4"/></g></svg>
<svg style="left:866.7px;top:102.8px" width="10" height="10" viewBox="-5 -5 10 10"><g transform="rotate(90)"><path d="M0 -5L4.200 -0.400H1.400V4.800H-1.400V-0.400H-4.200z" fill="#f4f4f4"/></g></svg>
<svg style="left:836.7px;top:117.6px" width="10" height="10" viewBox="-5 -5 10 10"><g transform="rotate(-135)"><path d="M0 -5L4.200 -0.400H1.400V4.800H-1.400V-0.400H-4.200z" fill="#f4f4f4"/></g></svg>
<svg style="left:851.7px;top:117.6px" width="10" height="10" viewBox="-5 -5 10 10"><g transform="rotate(180)"><path d="M0 -5L4.200 -0.400H1.400V4.800H-1.400V-0.400H-4.200z" fill="#f4f4f4"/></g></svg>
<svg style="left:866.7px;top:117.6px" width="10" height="10" viewBox="-5 -5 10 10"><g transform="rotate(135)"><path d="M0 -5L4.200 -0.400H1.400V4.800H-1.400V-0.400H-4.200z" fill="#f4f4f4"/></g></svg>
<svg style="left:851.7px;top:102.8px" width="10" height="10" viewBox="-5 -5 10 10"><path d="M0 -2.400L2.400 0L0 2.400L-2.400 0z" fill="none" stroke="#f0f0f0" stroke-width="0.900"/><path d="M0 -4.400v2M0 4.400v-2M-4.400 0h2M4.400 0h-2" stroke="#f0f0f0" stroke-width="0.900"/></svg>
<span style="left:833px;top:145.59px;font-size:7.2px;line-height:8.64px;color:#d0d0d0;transform:scaleX(0.949);">If keyframed:</span>
<div style="left:830.2px;top:156px;width:53.3px;height:12.4px;background:#1d1d1d;border:0.800px solid #787878;border-radius:1.500px;"></div>
<span style="left:833.5px;top:158.18px;font-size:7.8px;line-height:9.36px;color:#d8d8d8;transform:scaleX(0.934);">Insert ke...</span>
<svg style="left:873.500px;top:160px" width="7" height="5"><path d="M0.600 0.600L3 3L5.400 0.600" stroke="#bbb" stroke-width="0.900" fill="none"/></svg>
<span style="left:889px;top:157.68px;font-size:8px;line-height:9.60px;color:#aaa;transform:scaleX(1.125);font-style:italic;font-family:'Liberation Serif',serif;">i</span>
<div style="left:822.5px;top:174.3px;width:137.5px;height:160.5px;background:#1a1a1a;"></div>
<div style="left:824.3px;top:178.0px;width:128.3px;height:16.8px;background:#262626;"></div>
<span style="left:831px;top:182.89px;font-size:7.4px;line-height:8.88px;color:#858585;transform:scaleX(0.932);">Info</span>
<div style="left:824.3px;top:196.97px;width:128.3px;height:16.8px;background:#262626;"></div>
<span style="left:831px;top:201.86px;font-size:7.4px;line-height:8.88px;color:#858585;transform:scaleX(1.004);">Audio</span>
<div style="left:824.3px;top:215.94px;width:128.3px;height:16.8px;background:#262626;"></div>
<span style="left:831px;top:220.83px;font-size:7.4px;line-height:8.88px;color:#858585;transform:scaleX(0.950);">Preview</span>
<div style="left:824.3px;top:234.91px;width:128.3px;height:16.8px;background:#262626;"></div>
<span style="left:831px;top:239.80px;font-size:7.4px;line-height:8.88px;color:#858585;transform:scaleX(0.892);">Effects &amp; Presets</span>
<div style="left:824.3px;top:253.88px;width:128.3px;height:16.8px;background:#262626;"></div>
<span style="left:831px;top:258.77px;font-size:7.4px;line-height:8.88px;color:#858585;transform:scaleX(0.912);">Align</span>
<div style="left:824.3px;top:272.85px;width:128.3px;height:16.8px;background:#262626;"></div>
<span style="left:831px;top:277.74px;font-size:7.4px;line-height:8.88px;color:#858585;transform:scaleX(0.916);">Libraries</span>
<div style="left:824.3px;top:291.82px;width:128.3px;height:16.8px;background:#262626;"></div>
<span style="left:831px;top:296.71px;font-size:7.4px;line-height:8.88px;color:#858585;transform:scaleX(0.907);">Tracker</span>
<div style="left:824.3px;top:310.78999999999996px;width:128.3px;height:16.8px;background:#262626;"></div>
<span style="left:831px;top:315.68px;font-size:7.4px;line-height:8.88px;color:#858585;transform:scaleX(0.963);">Content-Aware Fill</span>
<div style="left:953.8px;top:176px;width:4.6px;height:158.5px;background:#1e1e1e;"></div>
<div style="left:954px;top:179px;width:4.2px;height:54.5px;background:#3a3a3a;border-radius:2px;"></div>
<div style="left:956.5px;top:90px;width:1.2px;height:62px;background:#3a3a3a;"></div>
<svg style="left:256px;top:319px" width="480" height="15" viewBox="0 0 480 15">
<g fill="#c4c4c4">
<path d="M3.500 4.500h5v3.600h-5z"/><path d="M5.500 6.500h5.400v4h-5.400z" fill="#888"/><circle cx="9.600" cy="9.600" r="1.600" fill="#ddd"/>
<path d="M17 3.600h8.400v5.600h-8.400zM18 4.500v3.800h6.400v-3.800zM20 9.200h2.400v1.400h1.200v0.800h-4.800v-0.800h1.200z" fill-rule="evenodd"/>
<path d="M29.500 4h9.400v5h-3l-0.800-1.200h-1.800l-0.800 1.200h-3zM31 5.400v2.200h2.400v-2.200zM35 5.400v2.200h2.400v-2.200z" fill-rule="evenodd"/><rect x="35.500" y="10" width="1.200" height="1.200"/>
</g>
<path d="M76.800 6l2.200 2.200l2.200-2.200" stroke="#999" stroke-width="0.900" fill="none"/>
<g fill="none" stroke="#c4c4c4" stroke-width="0.900"><rect x="88.200" y="3.600" width="7" height="6"/><path d="M91.700 3.600v6M88.200 6.600h7"/></g><rect x="95.600" y="10.400" width="1.200" height="1.200" fill="#c4c4c4"/>
<rect x="101.500" y="2" width="11" height="10.500" fill="#13294a"/><path d="M103.500 10.500l1-6.500h5l1 6.500z" fill="none" stroke="#2f74c4" stroke-width="0.900"/>
<path d="M158.500 5h2l0.800-1.200h3.400l0.800 1.200h2v5.600h-9z" fill="#c4c4c4"/><circle cx="163" cy="7.600" r="1.700" fill="#232323"/>
<path d="M174 5l4 5M178 5l-4 5" stroke="#3c3c3c" stroke-width="1.400"/>
<circle cx="190.800" cy="5.400" r="2" fill="#d83a3a"/><circle cx="189.200" cy="8.200" r="2" fill="#3aa84a"/><circle cx="192.400" cy="8.200" r="2" fill="#3a6fd8"/><rect x="192.500" y="11" width="1.200" height="1.200" fill="#c4c4c4"/>
<path d="M243.500 6l2.200 2.200l2.200-2.200" stroke="#999" stroke-width="0.900" fill="none"/>
<rect x="255.200" y="3.800" width="8" height="6.600" fill="none" stroke="#c4c4c4" stroke-width="0.900"/><rect x="257" y="5.400" width="4.400" height="3.400" fill="#c4c4c4"/>
<rect x="267" y="2" width="11" height="10.500" fill="#13294a"/><g fill="none" stroke="#2f74c4" stroke-width="0.900"><rect x="268.800" y="3.800" width="7.400" height="6.600"/><path d="M270.500 5.500l4 3.400M274.500 5.500l-4 3.400"/></g>
<path d="M337.300 6l2.200 2.200l2.200-2.200" stroke="#999" stroke-width="0.900" fill="none"/>
<path d="M382.300 6l2.200 2.200l2.200-2.200" stroke="#999" stroke-width="0.900" fill="none"/>
<g fill="none" stroke="#c4c4c4" stroke-width="0.900"><path d="M393.500 3.400h8.600M395 3.400v1.800M400.600 3.400v1.800"/><rect x="394.600" y="6.400" width="6.400" height="4"/>
<rect x="408.200" y="3.400" width="8" height="6"/><path d="M411 8l1.400-2.400l1.400 2.400z" fill="#c4c4c4"/><path d="M410.500 11h3.400"/>
<path d="M421.500 5h2v4.800h-2zM425 3.400h2.200v6.400h-2.200zM428.800 5h2v4.800h-2zM420.800 10.800h11"/>
</g>
<g fill="#c4c4c4"><rect x="437.600" y="3" width="3" height="2.800"/><rect x="434.400" y="8.400" width="3" height="2.800"/><rect x="440.800" y="8.400" width="3" height="2.800"/></g><path d="M439.100 5.800v1.400M435.900 8.400v-1.200h6.400v1.200" stroke="#c4c4c4" stroke-width="0.800" fill="none"/>
<circle cx="454" cy="7.200" r="3" fill="none" stroke="#c4c4c4" stroke-width="1.800" stroke-dasharray="1.800 0.700"/>
</svg>
<span style="left:301.5px;top:321.84px;font-size:7.6px;line-height:9.12px;color:#b0b0b0;transform:scaleX(0.952);">100%</span>
<span style="left:374px;top:321.96px;font-size:7.4px;line-height:8.88px;color:#555;transform:scaleX(0.929);">0:00:00:00</span>
<span style="left:458px;top:322.49px;font-size:7.6px;line-height:9.12px;color:#b0b0b0;transform:scaleX(1.021);">Full</span>
<span style="left:540px;top:322.49px;font-size:7.6px;line-height:9.12px;color:#b0b0b0;transform:scaleX(0.893);">Active Camera</span>
<span style="left:608.5px;top:322.49px;font-size:7.6px;line-height:9.12px;color:#b0b0b0;transform:scaleX(0.904);">1 View</span>
<span style="left:718.6px;top:321.96px;font-size:7.4px;line-height:8.88px;color:#2f74c4;transform:scaleX(0.849);">+0.0</span>
<svg style="left:256px;top:90px;overflow:hidden" width="564" height="228.5" viewBox="256 90 564 228.500">
<g>
<!-- back strap -->
<path d="M472 210.500L480 212.500L467 243L459 241z" fill="#6e6e6e"/>
<!-- right hand (behind neck) -->
<path d="M563 258C565 254 567 250.500 569.500 248L575 250L575.500 253L579 256C579.500 260 578 265 575 269L566 270C563.500 267 562.500 262 563 258z" fill="#f4935d"/>
<!-- pants -->
<path d="M468.750 300L461.250 319.500L493.750 319.500L503.750 301.250L518.100 319.500L555 319.500L546.250 289L504 287L480 292z" fill="#1b1118"/>
<!-- shirt -->
<path d="M505 165L536 165L534 288.750C524 289.500 514 289.500 505 288.750z" fill="#ffffff"/>
<!-- neck skin -->
<path d="M520.800 130.800C518 138 514.500 148 512.500 160L512 168C517 178 530 179 537 167.500L538 153L545 150z" fill="#f4935d"/>
<!-- right arm piece -->
<path d="M543.300 240.500L543.300 254.500L558 252z" fill="#f0853f"/>
<!-- left vest panel -->
<path d="M491 149C497 147.600 505 147.400 511.200 147.600C512.600 160 512 180 508.900 197C506.500 212 504.400 226 504.400 240L505 292L476.500 292C473.500 270 474.500 230 475.800 197C476.500 185 477.500 181 479 178.500C488 177 495 170 496 160C496.500 155 494 151 491 149z" fill="#1b1118"/>
<!-- right vest panel -->
<path d="M533 160L540 155.500C545 158 548.500 165 549.600 175C550.500 190 549.500 205 548 215C546.500 228 546 240 546.250 291.700L533.500 291C533.500 270 534.500 235 536 214C537.500 200 538.500 190 537.500 179z" fill="#1b1118"/>
<!-- front strap -->
<path d="M532 159L541 155.800L595.500 247L587.500 248.500z" fill="#6e6e6e"/>
<rect x="557.500" y="196.500" width="5.500" height="5.500" fill="#8c8c8c" stroke="#d0d0d0" stroke-width="0.800" transform="rotate(30 560 199)"/>
<!-- rivets -->
<g fill="#e8e0e4"><circle cx="505.500" cy="178" r="0.700"/><circle cx="503.500" cy="194" r="0.700"/><circle cx="501.500" cy="212" r="0.700"/><circle cx="541.500" cy="178" r="0.700"/><circle cx="540" cy="194.500" r="0.700"/><circle cx="538.500" cy="211" r="0.700"/></g>
<!-- head -->
<path d="M523 112C521.500 120 520 126 519 131C517.500 136 516 142 515 147L528 158.500C532 158 536 156 539.200 151.700L542.500 151.700C546 151.500 548 150.500 550 149.200C553 147.500 555 145 556.700 142.500C558.500 140 560 137.500 561.700 135C564 132.500 566 130 567 128C568.500 125.500 569 123.500 568.800 121L548 104L530 108z" fill="#f4935d"/>
<path d="M550 134C553 132.500 557 133 559.500 136.500C558 140 556 143 553 146C550 149 546.500 151 542.500 151.500C540 150 539 146.500 540 143.500C544 143 547.500 139 550 134z" fill="#e8804a"/>
<path d="M541 143.500C543 145.800 546.500 145.600 548.200 143.200L545.800 141z" fill="#ffffff"/>
<path d="M546.200 127L550.500 128.200L546.800 130.400" stroke="#8a3a1a" stroke-width="1" fill="none"/>
<!-- hair -->
<path d="M528.300 89L582 89C584 92 582.500 97 578.300 100C584 101 588 106 587.500 113.300C586 116 583.500 117 581.700 116.700C583 120 582 124 575.800 126.700C572.500 126.500 570.500 124 568.800 121.500C565 121.500 562 120 559 118.500C556.500 117 554 115.500 552 114.500C549.500 112.500 547.500 111 545 110C541.500 111.500 538.500 114.500 535.500 118.500C533.500 121.500 532 124 530.300 126.300C528.500 126.200 527 125.500 526 124.800C524 125.500 523 126.500 522 127.500C520.500 129.500 519.500 132 518.100 134.800C516.500 132 515.800 128.500 515.800 125.400C515.600 121 516 117.500 516.700 114.100C517.500 108.500 519 104 520.900 100C522.500 96.500 525 93.500 527.500 90.700z" fill="#1b1118"/>
<ellipse cx="527" cy="114.600" rx="3.300" ry="7.500" fill="#f4935d" transform="rotate(6 527 114.600)"/>
<!-- arm -->
<path d="M491.500 148.800C482 154 469 162.500 457.300 170.500C449 176 440 182.500 433.200 187.800C428 192 425 195.500 424.400 200C424 203.500 425 207.500 426.700 212.200L432.800 235.500L445.800 233L441.700 212.200C440.500 208 439.500 205.500 439.200 203C445 198.500 455 191.500 462.300 186.900L481.500 175.500C488 172.500 494 168.500 495.500 163C496.500 156 495 151 491.500 148.800z" fill="#f4935d"/>
<path d="M492 149.200C495.500 151.500 497 156 496 163C494.500 171 488.500 178 482.500 181" fill="none" stroke="#ffffff" stroke-width="0.900"/>
<!-- guitar body -->
<path d="M413.500 240.300C418 238 422 237.200 426 237.400C436 239 445 243.500 453.300 244.200C459 244.500 464 243.800 468.900 242.200C474 240.500 478 238.500 482.500 236.400L500 229.600C504 227.500 508 226 511.700 225.700C516 225.500 519 226.300 521.400 227.600C525 229.500 528 231.500 529.200 233.500C526 235 523 235.800 519.400 236.400C515 237.200 511 238.500 507.800 240.300C504.500 242 502 244 500 246.100C497.500 249 496 251.500 495.100 253.900C494 257 493.500 259 493.200 260.700L485 281.250C486.500 284 488 286.500 490 288.750C492 291 494 292.500 496.250 293.750C498 295 500 296 501.900 296.900C501.500 299 501 300.500 500 301.250C498 303 496 303.750 493.750 303.750C489 303.500 485 302.500 481.250 301.900C476 300.500 471 299.500 466.250 300C462 300.800 458.500 303.500 455 306C451.500 309 449 311.500 447.500 314.200C443 315.500 438 315.800 433.900 315.100C429 314 424 311.500 420.300 308.300C416 304.500 413 300 410.600 294.700C408 289.500 406 284.500 404.700 279.200C403.300 274 402.700 269 402.800 263.600C403 259 403.600 255.500 404.700 251.900C406.500 247 409.500 243 413.500 240.300z" fill="#d32420"/>
<!-- bridge -->
<path d="M421 266.500L432.500 265.300L434.300 287L423.500 288.600L423.200 285.500L430.800 284.600L429.600 268.700L421.300 269.600z" fill="#f2f2f2"/>
<path d="M417 269.800L428.500 268.700L430 285L418.500 286.500z" fill="#4a4a4e"/>
<!-- strings over body -->
<path d="M431 270.500L472 265.500M431 274L472 269.500M431 277.500L472 273.500" stroke="#efb8ae" stroke-width="0.700" fill="none"/>
<!-- neck pickup -->
<path d="M469.600 260.500L478.800 259L479.300 262.600L474.200 263.500L475.600 277L481.300 276.200L481.700 280L472.300 281.200z" fill="#f2f2f2"/>
<!-- neck -->
<path d="M474.500 261.600L598.300 248.300L603.300 242.500L610 241.700L620 244.200L633.300 240L635 259.200L620 260.800L610 265L605.800 265L601.700 259.200L474.500 277.600z" fill="#1b1118"/>
<path d="M477 266.400L624 248.200M477 270L624 251.700M477 273.600L624 255.200" stroke="#d9cdd3" stroke-width="0.700" fill="none"/>
<path d="M622.500 245L625.800 244.600L626.800 256.300L623.500 256.700z" fill="#8a8a8a"/>
<!-- fingers of right hand over neck -->
<path d="M562.800 259.500L578.800 257C579 261.500 577.500 265.500 575 269L566 270C563.500 267 562.500 263 562.800 259.500z" fill="#f4935d"/>
<path d="M567 258.800l0.800 3.200M570.200 258.400l0.800 3.200M573.400 258l0.800 3.200" stroke="#1b1118" stroke-width="0.900"/>
<!-- knobs -->
<circle cx="422.200" cy="298.600" r="1.900" fill="#8f1c1c"/><circle cx="431" cy="305.400" r="1.900" fill="#8f1c1c"/>
<!-- pick thing -->
<path d="M449.500 277L459.300 275.600L459.900 285.300L450.200 286.600z" fill="#e0574f"/>
<!-- wristband -->
<path d="M432.700 236.700L445 232.800L447.600 246.400L436.600 250.300z" fill="#1b1118"/>
<!-- left hand -->
<path d="M437.900 250.500L447.600 247C451 249 453.500 251.500 455.400 254.800C457.500 258 458.500 261 458.600 263.900L459.300 276.900C458 279 457 280 455.400 280.700C453 280.500 451 279.500 448.900 278.100C447 276.500 445 275 443.700 273C441.500 270 440 267 439.200 263.900z" fill="#f4935d"/>
<path d="M448.200 260.500C450 258.500 452.500 258 454 260L456 266L456 277L450.200 276L448.200 265z" fill="#de7262"/>
</g>
<!-- transform boxes -->
<g fill="none" stroke="#b8b8b8" stroke-width="0.600">
<path d="M474.400 160V142.200H501M474.400 276.900V295.500H505M534 295.500H560.700V271M561.200 150V168"/>
</g>
<g fill="#9b9ba6">
<rect x="521.200" y="144.200" width="4.600" height="4.600"/><rect x="558.900" y="144.400" width="4.600" height="4.600"/><rect x="596" y="144.400" width="4.600" height="4.600"/>
<rect x="521.400" y="198" width="4.600" height="4.600"/><rect x="596" y="198" width="4.600" height="4.600"/>
<rect x="521.400" y="251.400" width="4.600" height="4.600"/><rect x="558.500" y="251.400" width="4.600" height="4.600"/><rect x="595.200" y="251.400" width="4.600" height="4.600"/>
</g>
</svg>

<svg style="left:0px;top:377px" width="70" height="11" viewBox="0 0 70 11">
<path d="M3.800 5.600C5.500 2.900 10.500 2.900 12.200 5.600C10.500 8.300 5.500 8.300 3.800 5.600z" fill="#c8c8c8"/><circle cx="8" cy="5.600" r="1.500" fill="#2c2c2c"/>
<path d="M14.200 4.400h1.600l2.200-2v6.400l-2.200-2h-1.600z" fill="#c8c8c8"/><path d="M19.200 3.200c1.200 1.400 1.200 3.400 0 4.800M20.600 2.200c1.800 2 1.800 4.800 0 6.800" stroke="#c8c8c8" stroke-width="0.700" fill="none"/>
<circle cx="26.800" cy="5.600" r="2.100" fill="#c8c8c8"/>
<rect x="33.400" y="5" width="5.600" height="4.200" fill="#c8c8c8"/><path d="M34.600 5V3.600a1.600 1.600 0 0 1 3.200 0V5" fill="none" stroke="#c8c8c8" stroke-width="0.900"/><rect x="35.700" y="6.200" width="1" height="1.600" fill="#2c2c2c"/>
<path d="M52 1.800h3.400l4.200 4.200l-3.400 3.400l-4.200-4.200z" fill="#c8c8c8"/><circle cx="53.600" cy="3.400" r="0.800" fill="#2c2c2c"/>
</svg>
<svg style="left:350px;top:377px" width="80" height="11" viewBox="0 0 80 11">
<g fill="#c0c0c0"><path d="M1.500 6C1.500 1.800 7.500 1.800 7.500 6z"/></g><path d="M2.600 6v2M4.500 2.600v5.400M6.400 6v2" stroke="#c0c0c0" stroke-width="0.800"/>
<circle cx="13.600" cy="5.500" r="1.500" fill="none" stroke="#c0c0c0" stroke-width="0.800"/><path d="M13.600 2.500v1.400M13.600 7.100v1.400M10.600 5.500h1.400M15.200 5.500h1.400" stroke="#c0c0c0" stroke-width="0.800"/>
<path d="M19.500 2.400L25 8.600" stroke="#c0c0c0" stroke-width="0.900"/>
<rect x="38" y="2.400" width="6.400" height="6.200" fill="#c0c0c0"/><rect x="39.400" y="5" width="3.600" height="1.200" fill="#2c2c2c"/>
<path d="M47.500 8l3.600-5c1-1.200 3 0.200 2 1.600l-3.400 4.800c-1.200 1.200-3.200 0-2.200-1.400z" fill="none" stroke="#c0c0c0" stroke-width="0.900"/>
<circle cx="60.500" cy="5.500" r="3" fill="#c0c0c0"/><path d="M60.500 2.500a3 3 0 0 1 0 6z" fill="#2c2c2c"/>
<path d="M70 2.400l3 1.400v3.600l-3 1.400l-3-1.400v-3.600zM67 3.800l3 1.400l3-1.400M70 5.200v3.600" fill="none" stroke="#c0c0c0" stroke-width="0.700"/>
</svg>
<span style="left:378.5px;top:378.48px;font-size:8px;line-height:9.60px;color:#c0c0c0;transform:scaleX(1.205);font-style:italic;">fx</span>
<svg style="left:398px;top:358px" width="112" height="14" viewBox="0 0 112 14">
<g fill="#c4c4c4" stroke="none">
<path d="M3 3.600h5v1.400h-5zM8 4h3.400v0.800h-3.400zM11.400 3h2.200v2.600h-2.200zM9 5l2.600 3.400l-0.600 0.400l-2.600-3.400zM11 8h2.200v2.600h-2.200z"/>
<circle cx="25" cy="3.600" r="1.700"/><path d="M29 5.200l3.400 1.400v3.800l-3.400 1.600l-3.400-1.600v-3.800z" fill="none" stroke="#c4c4c4" stroke-width="0.800"/><path d="M25.600 6.600l3.400 1.400l3.400-1.400M29 8v4" fill="none" stroke="#c4c4c4" stroke-width="0.700"/>
<path d="M45.500 8C45.500 3 55 3 55 8zM44.500 8.600h11.500v1.600h-11.500z"/>
<path d="M62 4.600h5.600v5.800h-5.600z"/><path d="M64 2.800h5.600v5.800" fill="none" stroke="#c4c4c4" stroke-width="0.900"/>
</g>
<path d="M79.500 9.500l4-5.500c1.200-1.400 3.400 0.200 2.200 1.800l-3.800 5.300c-1.400 1.400-3.600 0-2.400-1.600z" fill="#777" stroke="#c4c4c4" stroke-width="0.800"/>
<rect x="99.500" y="3.400" width="9" height="7.600" fill="none" stroke="#c4c4c4" stroke-width="0.900"/><path d="M100.500 4.600c3.500 0 3.500 5.200 7 5.200" fill="none" stroke="#c4c4c4" stroke-width="0.800"/>
</svg>
<svg style="left:25px;top:446px" width="10" height="13" viewBox="25 446 10 13"><path d="M27.200 448.300L27.200 455.800L28.900 454.300L30.200 457L31.300 456.500L30.100 453.800L32.400 453.600z" fill="#ffffff" stroke="#222" stroke-width="0.500"/></svg>
</div></body></html>
